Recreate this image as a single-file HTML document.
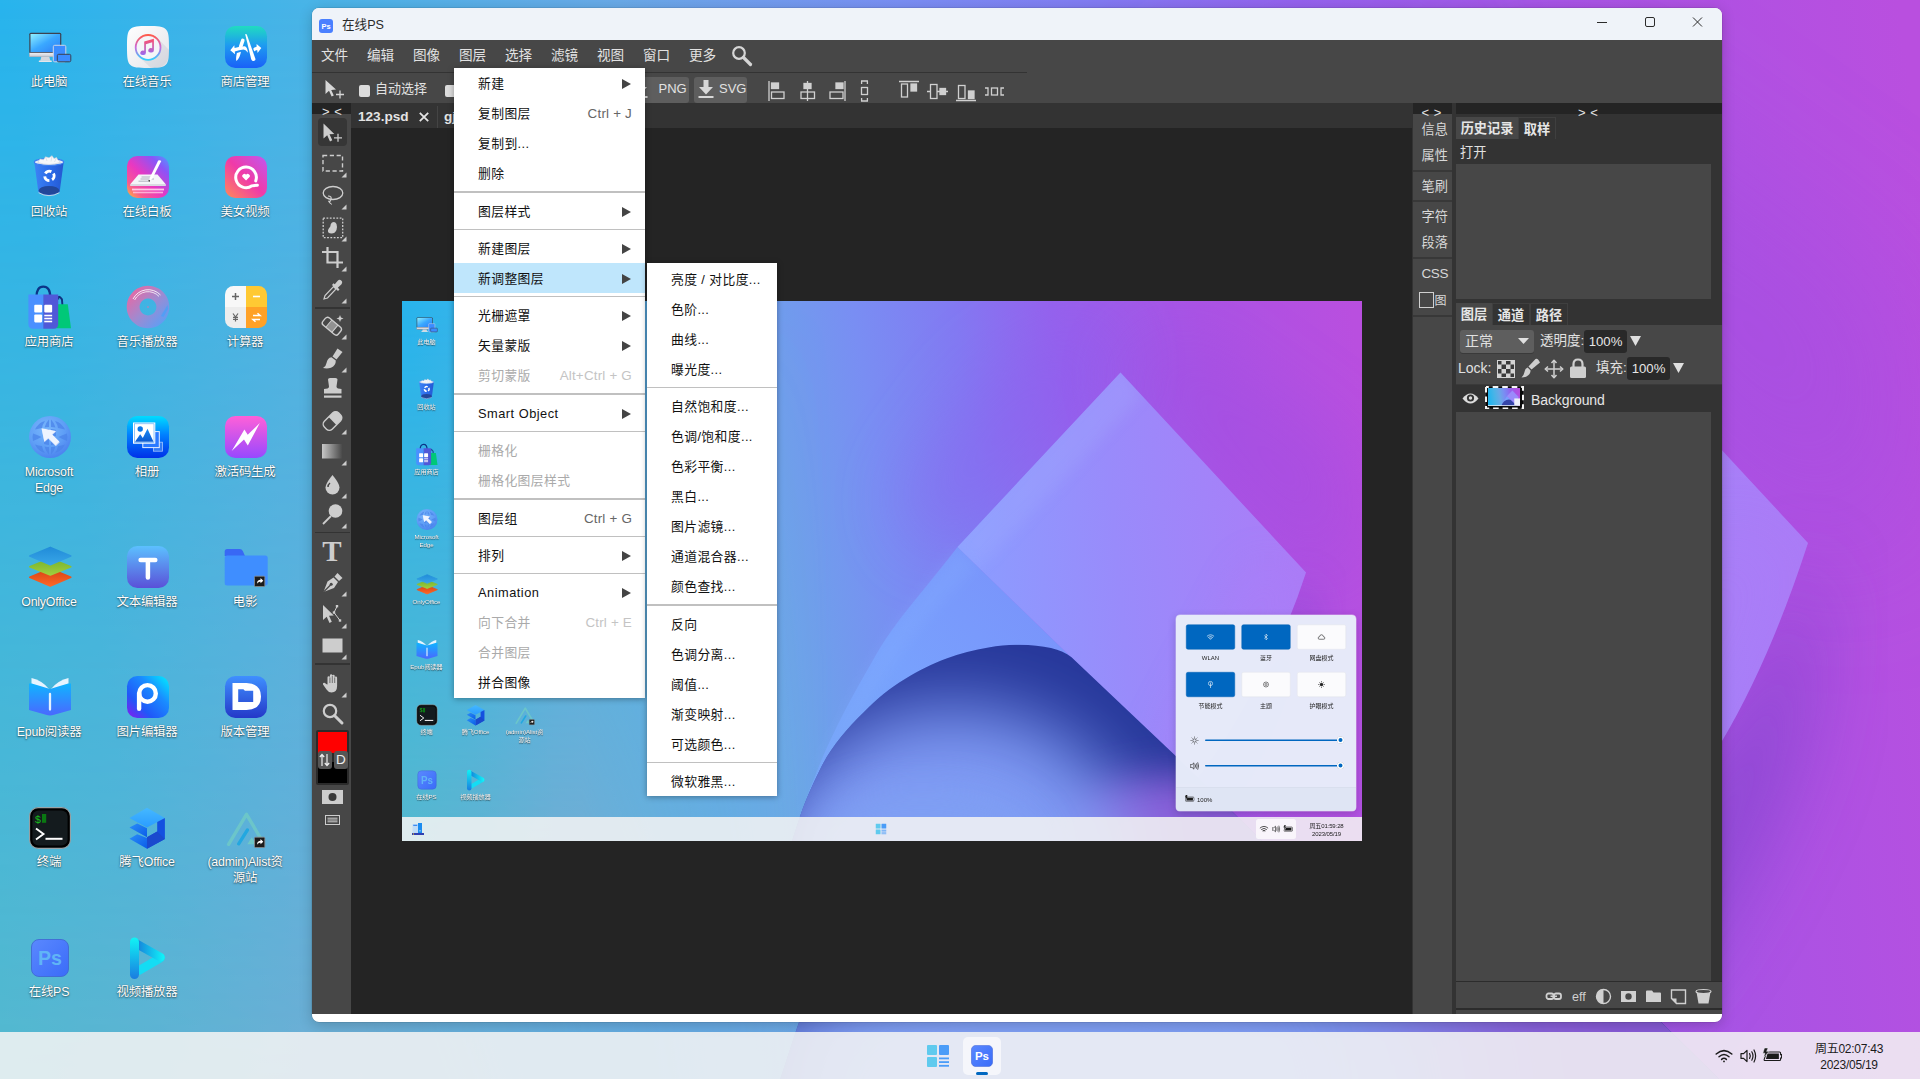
<!DOCTYPE html><html lang="zh-CN"><head><meta charset="utf-8"><title>在线PS</title><style>*{box-sizing:border-box;margin:0;padding:0}
html,body{width:1920px;height:1079px;overflow:hidden;background:#7b8df4}
body{font-family:"Liberation Sans","Noto Sans CJK SC",sans-serif;position:relative;color:#000}
.desk{position:absolute;left:0;top:0;width:1920px;height:1080px;overflow:hidden}
.desk .wp{position:absolute;left:0;top:0;display:block}
.dicon{position:absolute;width:98px;height:130px;text-align:center}
.dicon .ico{position:absolute;left:28.500px;top:26.300px;overflow:visible}
.dicon span{position:absolute;left:-6px;right:-6px;top:74px;font-size:12.400px;line-height:16px;color:#fff;text-shadow:0 1px 2px rgba(0,0,0,.55),0 0 1px rgba(0,0,0,.4);letter-spacing:-.2px}
.tb{position:absolute;left:0;top:1032px;width:1920px;height:48px;background:rgba(243,243,244,.865);z-index:5}
.tb .cl{position:absolute;left:1789px;width:120px;top:9px;text-align:center;font-size:12px;line-height:16px;color:#1b1b1b;letter-spacing:-.25px}
.tb .hl{position:absolute;left:963px;top:5px;width:38px;height:38px;border-radius:5px;background:rgba(255,255,255,.62)}
.tb .ind{position:absolute;left:976px;top:40px;width:12px;height:3px;border-radius:2px;background:#0067c0}
.tb svg{position:absolute}
.qs{position:absolute;left:1548px;top:628px;width:360px;height:392px;border-radius:8px;background:rgba(231,236,249,.985);box-shadow:0 0 0 1px rgba(255,255,255,.5),0 4px 16px rgba(0,0,0,.18);overflow:hidden}
.qb{position:absolute;width:98px;height:50px;border-radius:4px;background:#fbfbfd;border:1px solid #e3e5ea;display:flex;align-items:center;justify-content:center}
.qb.on{background:#0067c0;border-color:#0060b4}
.ql{position:absolute;width:98px;text-align:center;font-size:12px;line-height:16px;color:#222}
.qt{position:absolute;left:58px;width:268px;height:3px;border-radius:2px;background:#0067c0}
.qh{position:absolute;left:322px;width:14px;height:14px;border-radius:50%;background:#0067c0;border:3px solid #fff;box-shadow:0 0 1px rgba(0,0,0,.4)}
.qf{position:absolute;left:0;right:0;bottom:0;height:48px;background:rgba(222,228,243,.9);border-top:1px solid rgba(0,0,0,.05)}
.mini{transform:scale(.5);transform-origin:0 0}
.win{position:absolute;left:312px;top:8px;width:1410px;height:1014px;border-radius:7px;overflow:hidden;background:#fff;box-shadow:0 0 0 .5px rgba(0,0,0,.15),0 3px 14px rgba(0,0,0,.2)}
.wi{position:absolute;left:-312px;top:-8px;width:1920px;height:1079px;font-size:14px;color:#ddd}
.wi div,.wi span,.wi svg{position:absolute}
.tbar{left:312px;top:8px;width:1410px;height:32px;background:#eff3f9}
.tbar .tt{left:30px;top:7.500px;font-size:12.600px;line-height:18px;color:#2a2a2a}
.app{left:312px;top:40px;width:1410px;height:973.500px;background:#474747}
.mb{left:312px;top:40px;width:714.500px;height:32.500px;border-bottom:1.500px solid #333}
.mb span{top:7px;font-size:13.600px;line-height:18px;color:#e2e2e2;white-space:nowrap}
.ob span{font-size:13px;line-height:16px;color:#e2e2e2;white-space:nowrap}
.cb{width:11.500px;height:11.500px;border-radius:2px;background:#dcdcdc;top:85px}
.btn{top:77px;height:25.500px;border-radius:3px;background:#5e5e5e}
.dark{background:#242424}
.mid{background:#333}
.tab{top:106px;height:22px;background:#333;font-weight:bold;font-size:13.600px;line-height:22px;color:#e4e4e4;white-space:nowrap}
.tool{left:321px}
.tl{left:315px;width:35px;height:1.500px;background:#333}
.ncol span{left:1421.500px;font-size:13.200px;line-height:18px;color:#d8d8d8;white-space:nowrap}
.nl{left:1413px;width:39px;height:1.500px;background:#383838}
.ptab{font-weight:bold;font-size:13.200px;line-height:23px;color:#e6e6e6;text-align:center;white-space:nowrap}
.ptab.on{background:#474747}
.ptab.off{background:#333;border:1px solid #3f3f3f;border-bottom:none}
.fld{background:#292929;border-radius:3px;color:#e6e6e6;font-size:13.200px;line-height:23px;text-align:center}
.lp span{font-size:13.500px;line-height:18px;color:#e0e0e0;white-space:nowrap}
.menu{position:absolute;background:#fff;padding:.300px 0 .300px 0;box-shadow:0 1px 6px rgba(0,0,0,.35);font-size:12.800px;letter-spacing:.4px;color:#111}
.menu .mi{position:relative;height:30px;line-height:32px;white-space:nowrap}
.menu .mi span{position:absolute;left:24px;top:0}
.m2 .mi span{left:24px}
.menu .mi em{position:absolute;right:12.500px;top:0;font-style:normal;color:#666;font-size:13.400px;letter-spacing:.2px}
.menu .mi .ar{position:absolute;right:13.500px;top:11px;width:0;height:0;border-left:9px solid #444;border-top:5px solid transparent;border-bottom:5px solid transparent}
.menu .mi.hl{background:#bfe6fc}
.menu .mi.dis span{color:#aaa}
.menu .mi.dis em{color:#c4c4c4}
.menu .sep{height:1.400px;margin:3px 0 3px 0;background:#c0c0c0}
.m2{padding:1px 0 0 0}
.menu .mi span.lat{letter-spacing:.5px}
.m2 .mi{line-height:31px}
.m2 .mi .ar{top:11px}
</style></head><body>
<svg width="0" height="0" style="position:absolute">
<defs>
<linearGradient id="g_scr" x1="0" y1="0" x2="1" y2="1"><stop offset="0" stop-color="#8ff0ff"/><stop offset=".5" stop-color="#3aa8ff"/><stop offset="1" stop-color="#2f7df5"/></linearGradient>
<linearGradient id="g_sil" x1="0" y1="0" x2="0" y2="1"><stop offset="0" stop-color="#eef0f4"/><stop offset="1" stop-color="#c4c8d2"/></linearGradient>
<linearGradient id="g_wht" x1="0" y1="0" x2="1" y2="1"><stop offset="0" stop-color="#ffffff"/><stop offset="1" stop-color="#e2e3e8"/></linearGradient>
<linearGradient id="g_ring" x1="0" y1="0" x2="0" y2="1"><stop offset="0" stop-color="#ff5a4a"/><stop offset=".5" stop-color="#c86add"/><stop offset="1" stop-color="#2fd0ff"/></linearGradient>
<linearGradient id="g_note" x1="0" y1="0" x2="0" y2="1"><stop offset="0" stop-color="#ff4f6a"/><stop offset="1" stop-color="#9a6af0"/></linearGradient>
<linearGradient id="g_store" x1="0" y1="0" x2="0" y2="1"><stop offset="0" stop-color="#20dcc0"/><stop offset=".45" stop-color="#1e9cf0"/><stop offset="1" stop-color="#1a60f8"/></linearGradient>
<linearGradient id="g_bin" x1="0" y1="0" x2="1" y2="0"><stop offset="0" stop-color="#3d83f5"/><stop offset=".6" stop-color="#2a68e6"/><stop offset="1" stop-color="#2458d0"/></linearGradient>
<linearGradient id="g_wb" x1="1" y1="0" x2="0" y2="1"><stop offset="0" stop-color="#4aa0ff"/><stop offset=".22" stop-color="#8a55f8"/><stop offset=".55" stop-color="#ea38c0"/><stop offset=".8" stop-color="#f85a90"/><stop offset="1" stop-color="#ffc030"/></linearGradient>
<linearGradient id="g_girl" x1="1" y1="0" x2="0" y2="1"><stop offset="0" stop-color="#c058f0"/><stop offset=".5" stop-color="#f03aa8"/><stop offset="1" stop-color="#ff8a58"/></linearGradient>
<linearGradient id="g_disc" x1="0" y1="0" x2="1" y2="1"><stop offset="0" stop-color="#fa5f98"/><stop offset=".5" stop-color="#a08ad0"/><stop offset="1" stop-color="#4aa4ff"/></linearGradient>
<radialGradient id="g_globe" cx=".4" cy=".3" r=".75"><stop offset="0" stop-color="#78b6fc"/><stop offset=".6" stop-color="#5e9ef6"/><stop offset="1" stop-color="#4a80ee"/></radialGradient>
<linearGradient id="g_album" x1="0" y1="0" x2="0" y2="1"><stop offset="0" stop-color="#00dcff"/><stop offset=".45" stop-color="#0080ff"/><stop offset="1" stop-color="#0030e8"/></linearGradient>
<linearGradient id="g_mtn" x1="0" y1="0" x2="0" y2="1"><stop offset="0" stop-color="#1a8cf5"/><stop offset="1" stop-color="#0a58d0"/></linearGradient>
<linearGradient id="g_bolt" x1="0" y1="0" x2="0" y2="1"><stop offset="0" stop-color="#ff60d8"/><stop offset="1" stop-color="#9848ff"/></linearGradient>
<linearGradient id="g_txt" x1="0" y1="0" x2="0" y2="1"><stop offset="0" stop-color="#5cc0ff"/><stop offset="1" stop-color="#5a50d8"/></linearGradient>
<linearGradient id="g_book" x1="0" y1="0" x2="0" y2="1"><stop offset="0" stop-color="#10b4ff"/><stop offset="1" stop-color="#4a68ff"/></linearGradient>
<linearGradient id="g_pe" x1="1" y1="0" x2="0" y2="1"><stop offset="0" stop-color="#00f0ff"/><stop offset=".35" stop-color="#1a8cff"/><stop offset=".7" stop-color="#2058f8"/><stop offset="1" stop-color="#8a18f0"/></linearGradient>
<linearGradient id="g_ver" x1="0" y1="0" x2="0" y2="1"><stop offset="0" stop-color="#3f90ff"/><stop offset="1" stop-color="#2438c8"/></linearGradient>
<linearGradient id="g_ps" x1="0" y1="0" x2="1" y2="1"><stop offset="0" stop-color="#5a88ff"/><stop offset="1" stop-color="#3a6cf8"/></linearGradient>
<linearGradient id="g_vp1" gradientUnits="userSpaceOnUse" x1="0" y1="0" x2="0" y2="42"><stop offset="0" stop-color="#10f5f5"/><stop offset="1" stop-color="#1a7ce0"/></linearGradient>
<linearGradient id="g_vp2" gradientUnits="userSpaceOnUse" x1="8" y1="0" x2="36" y2="0"><stop offset="0" stop-color="#1878d8"/><stop offset="1" stop-color="#10f0f8"/></linearGradient>
<linearGradient id="g_tf1" x1="0" y1="0" x2="0" y2="1"><stop offset="0" stop-color="#45b8ff"/><stop offset="1" stop-color="#2a9cff"/></linearGradient>
<linearGradient id="g_tf2" x1="0" y1="0" x2="1" y2="1"><stop offset="0" stop-color="#2a8ef8"/><stop offset="1" stop-color="#0a5ce8"/></linearGradient>
<linearGradient id="g_oo1" gradientUnits="userSpaceOnUse" x1="0" y1="0" x2="0" y2="20"><stop offset="0" stop-color="#1f8ad8"/><stop offset="1" stop-color="#3aa8e8"/></linearGradient>
<linearGradient id="g_oo2" gradientUnits="userSpaceOnUse" x1="0" y1="16" x2="0" y2="30"><stop offset="0" stop-color="#7fb82f"/><stop offset="1" stop-color="#a2d040"/></linearGradient>
<linearGradient id="g_oo3" gradientUnits="userSpaceOnUse" x1="0" y1="27" x2="0" y2="41"><stop offset="0" stop-color="#e04a18"/><stop offset="1" stop-color="#ff6a28"/></linearGradient>
</defs></svg>
<div class="desk"><svg class="wp" viewBox="0 0 1920 1080" width="1920" height="1080" preserveAspectRatio="none">
<defs>
<linearGradient id="wpbg" gradientUnits="userSpaceOnUse" x1="0" y1="0" x2="1920" y2="-300">
<stop offset="0" stop-color="#28b4ed"/><stop offset=".158" stop-color="#49b4e7"/><stop offset=".315" stop-color="#69a9e7"/><stop offset=".457" stop-color="#798ef3"/><stop offset=".559" stop-color="#827af2"/><stop offset=".66" stop-color="#9562ed"/><stop offset=".81" stop-color="#aa53e4"/><stop offset=".965" stop-color="#b94fdf"/>
</linearGradient>
<linearGradient id="wpwc" gradientUnits="userSpaceOnUse" x1="0" y1="0" x2="800" y2="0"><stop offset="0" stop-color="#64bac4"/><stop offset=".38" stop-color="#7fadcd"/><stop offset="1" stop-color="#7fa8dc"/></linearGradient>
<linearGradient id="wpwv" gradientUnits="userSpaceOnUse" x1="0" y1="0" x2="0" y2="1080"><stop offset="0" stop-color="#fff" stop-opacity="0"/><stop offset=".45" stop-color="#fff" stop-opacity=".36"/><stop offset="1" stop-color="#fff" stop-opacity=".74"/></linearGradient>
<linearGradient id="wpwh" gradientUnits="userSpaceOnUse" x1="0" y1="0" x2="860" y2="0"><stop offset="0" stop-color="#fff"/><stop offset=".42" stop-color="#fff"/><stop offset="1" stop-color="#000"/></linearGradient>
<mask id="wpmh"><rect width="1920" height="1080" fill="url(#wpwh)"/></mask>
<mask id="wpm"><rect width="1920" height="1080" fill="url(#wpwv)" mask="url(#wpmh)"/></mask>
<linearGradient id="wpdia" gradientUnits="userSpaceOnUse" x1="1130" y1="560" x2="1800" y2="500">
<stop offset="0" stop-color="#8b9dff"/><stop offset=".45" stop-color="#998bfb"/><stop offset="1" stop-color="#ab7cf7"/>
</linearGradient>
<linearGradient id="wplb" gradientUnits="userSpaceOnUse" x1="800" y1="1000" x2="1300" y2="600">
<stop offset="0" stop-color="#74a6f6"/><stop offset=".5" stop-color="#78a1fd"/><stop offset="1" stop-color="#7a93fb"/>
</linearGradient>
<radialGradient id="wpcurl" gradientUnits="userSpaceOnUse" cx="1090" cy="1090" r="520" gradientTransform="translate(1090 1090) scale(1 .78) translate(-1090 -1090)">
<stop offset="0" stop-color="#7a9bf2"/><stop offset=".4" stop-color="#7488eb"/><stop offset=".68" stop-color="#5364cd"/><stop offset=".88" stop-color="#3242aa"/><stop offset="1" stop-color="#27389b"/>
</radialGradient>
<linearGradient id="wpcurl2" gradientUnits="userSpaceOnUse" x1="1200" y1="900" x2="1560" y2="1080">
<stop offset="0" stop-color="#8a55d8" stop-opacity="0"/><stop offset="1" stop-color="#8a55d8" stop-opacity=".9"/>
</linearGradient>
<filter id="wpblur" x="-30%" y="-30%" width="160%" height="160%"><feGaussianBlur stdDeviation="40"/></filter>
<filter id="wpblur3" x="-50%" y="-50%" width="200%" height="200%"><feGaussianBlur stdDeviation="75"/></filter>
<filter id="wpblur2" x="-30%" y="-30%" width="160%" height="160%"><feGaussianBlur stdDeviation="14"/></filter>
</defs>
<rect width="1920" height="1080" fill="url(#wpbg)"/>
<rect width="860" height="1080" fill="url(#wpwc)" mask="url(#wpm)"/>
<!-- shadow under the sheet at right -->
<path d="M1808 545 Q1770 660 1722 741 Q1650 880 1590 955 L1560 1010 L1660 1000 Q1740 900 1790 770 Q1822 660 1808 545Z" fill="#7640c6" opacity=".62" filter="url(#wpblur)"/>
<!-- soft glow left of light-blue sheet -->
<path d="M1437 143 L1130 470 L1040 500 L1000 380 L1170 150 L1380 20Z" fill="#8d5cee" opacity=".4" filter="url(#wpblur3)"/>
<path d="M1437 143 L1808 543 L1900 560 L1900 300 L1560 60Z" fill="#9c4be0" opacity=".35" filter="url(#wpblur3)"/>
<!-- light blue sheet -->
<path d="M1111 492 C1040 585 985 640 941 720 C900 790 860 865 830 940 C815 978 805 1005 796 1031 L780 1080 L1700 1080 L1339 713 Z" fill="url(#wplb)"/>
<!-- diamond sheet -->
<path d="M1437 143 L1808 543 Q1770 660 1722 741 Q1650 880 1590 955 L1339 713 L1111 492 Z" fill="url(#wpdia)"/>
<clipPath id="wpdc"><path d="M1437 143 L1808 543 Q1770 660 1722 741 Q1650 880 1590 955 L1339 713 L1111 492 Z"/></clipPath>
<g clip-path="url(#wpdc)"><path d="M1437 120 L1090 492 L1150 540 L1480 190Z" fill="#a8b6ff" opacity=".22" filter="url(#wpblur2)"/><path d="M1808 543 L1722 741 L1590 955 L1500 900 L1700 520Z" fill="#b07cf8" opacity=".25" filter="url(#wpblur)"/></g>
<path d="M1111 492 C1040 585 985 640 941 720 C900 790 860 865 830 940 L870 940 C900 870 940 790 980 730 C1030 650 1090 590 1150 530Z" fill="#86b0ff" opacity=".25" filter="url(#wpblur2)"/>
<!-- dark curl -->
<clipPath id="wpcc"><path d="M780 1080 L796 1031 C810 990 825 960 839 931 C860 890 890 855 923 823 C950 795 975 775 1006 756 C1035 738 1060 726 1089 715 C1115 705 1145 698 1173 693 C1195 689 1215 687 1235 687.6 C1258 688 1280 690 1298 694 C1315 698 1328 704 1339 712.6 L1548 910.5 L1720 1080 Z"/></clipPath>
<g clip-path="url(#wpcc)">
<rect x="700" y="600" width="1100" height="500" fill="#26379a"/>
<ellipse cx="1560" cy="1120" rx="300" ry="170" fill="#8a5cd8" filter="url(#wpblur)"/>
<ellipse cx="1100" cy="1110" rx="360" ry="300" fill="#7f9af4" filter="url(#wpblur3)"/>
<ellipse cx="1040" cy="1090" rx="240" ry="120" fill="#7fa0f3" opacity=".8" filter="url(#wpblur)"/>
</g>
</svg>
<div class="dicon" style="left:0px;top:0.0px"><svg class="ico" viewBox="0 0 42 42" width="42" height="42" ><g transform="translate(-.700 .800)">
<rect x="1" y="6" width="32" height="24" rx="1.5" fill="#3c4250"/>
<rect x="2.2" y="7.2" width="29.6" height="18" fill="url(#g_scr)"/>
<rect x="1" y="26" width="32" height="4" fill="url(#g_sil)"/>
<path d="M13 30 L21 30 L22 34 L12 34Z" fill="#d4d7de"/><rect x="10.5" y="33.6" width="13" height="1.6" rx=".6" fill="#e4e6ea"/>
<rect x="25" y="18.5" width="12.5" height="16.5" rx="1.4" fill="#3b8cff" stroke="#cfd6e6" stroke-width="1"/>
<rect x="29" y="27.5" width="13.5" height="7.5" rx="1.4" fill="#3b8cff" stroke="#3c4250" stroke-width="1"/>
</g></svg><span>此电脑</span></div><div class="dicon" style="left:98px;top:0.0px"><svg class="ico" viewBox="0 0 42 42" width="42" height="42" >
<path d="M21 0 C31 0 36 .300 38.800 3.200 C41.700 6 42 11 42 21 C42 31 41.700 36 38.800 38.800 C36 41.700 31 42 21 42 C11 42 6 41.700 3.200 38.800 C.300 36 0 31 0 21 C0 11 .300 6 3.200 3.200 C6 .300 11 0 21 0Z" fill="url(#g_wht)"/>
<path d="M30.500 12 L42 24 L42 27 Q41.500 40.500 30 41.700 L24 41.900 L12 31Z" fill="#1a2a50" opacity=".07"/>
<circle cx="21.100" cy="21.400" r="12.400" fill="#f4f5f8" stroke="url(#g_ring)" stroke-width="1.800"/>
<path d="M17.200 15.600 L26.900 12.700 L26.900 24.300 A2.800 2.200 0 1 1 25.200 22.300 L25.200 16.300 L18.900 18.200 L18.900 26.700 A2.800 2.200 0 1 1 17.200 24.700Z" fill="url(#g_note)"/>
</svg><span>在线音乐</span></div><div class="dicon" style="left:196px;top:0.0px"><svg class="ico" viewBox="0 0 42 42" width="42" height="42" >
<rect x="0" y="0" width="42" height="42" rx="10.300" fill="url(#g_store)"/>
<g fill="#fff"><path d="M20.200 8.200 Q21.200 7.500 21.900 8.700 L30.300 32.400 Q30.700 34.800 28.800 35.100 Q27 35.300 26.200 33.200Z"/>
<path d="M17.800 14.400 L15.600 20.800" stroke="#fff" stroke-width="3.600" stroke-linecap="round"/>
<path d="M11.900 26.900 L15.900 25.700 Q15.200 31.200 11.500 35.100 Q10.500 33 11.900 26.900Z"/>
<path d="M5.300 24.200 L9.300 19.300 L9.600 22.100 Q15 20.500 19.600 20.300 Q22.200 20.600 23 26.800 Q20.500 23.600 18.500 23.500 Q14 24 9.800 25.400 L10 28.300Z"/>
<path d="M36.300 22 L31.600 18.100 L31.600 20.700 Q29.500 21.100 28.200 22.700 L29.300 25.500 Q30.500 24.200 32.200 24 L32.600 26.900Z"/></g>
</svg><span>商店管理</span></div><div class="dicon" style="left:0px;top:130.1px"><svg class="ico" viewBox="0 0 42 42" width="42" height="42" >
<path d="M5.300 6 L34.700 6 L30.600 36.300 Q20 42.600 9.400 36.300Z" fill="url(#g_bin)"/>
<ellipse cx="20" cy="34.400" rx="10.300" ry="4.400" fill="#22479a"/>
<path d="M9.600 36.700 Q20 42.600 30.400 36.700" fill="none" stroke="#efe6e4" stroke-width=".9" opacity=".85"/>
<ellipse cx="20" cy="6" rx="14.700" ry="3.400" fill="#e4eaf6" stroke="#3b7df0" stroke-width="1.100"/>
<path d="M9 6.500 L11 3 L14.500 3.800 L16.500 .800 L20 1.800 L23 -.300 L25 2.500 L27.500 1.500 L29 4 L31.500 6.300 Q20 10.500 9 6.500Z" fill="#f6f7fa" stroke="#c4cad6" stroke-width=".5"/>
<path d="M16.500 .800 L18 5 M23 -.300 L22 5.500 M27.500 1.500 L25.500 6" stroke="#c9ced8" stroke-width=".5" fill="none"/>
<g fill="none" stroke="#fff" stroke-width="2.900"><path d="M16.33 17.55 A4.7 4.7 0 0 1 22.39 15.64"/><path d="M24.47 17.55 A4.7 4.7 0 0 1 23.10 23.75"/><path d="M20.40 24.60 A4.7 4.7 0 0 1 15.72 20.31"/></g>
</svg><span>回收站</span></div><div class="dicon" style="left:98px;top:130.1px"><svg class="ico" viewBox="0 0 42 42" width="42" height="42" >
<rect x="0" y="0" width="42" height="42" rx="10.300" fill="url(#g_wb)"/>
<path d="M6 36.5 L36 36.5" stroke="#ffd0e8" stroke-width="1.6" opacity=".75"/><path d="M5 33.5 L37 33.5" stroke="#ffd8ee" stroke-width="1.8" opacity=".9"/>
<path d="M11.5 18.5 L30.5 18.5 L38.5 28 L38.5 30 L3.5 30 L3.5 28Z" fill="#f4f4f8"/><path d="M3.5 28 L38.5 28 L38.5 30 L3.5 30Z" fill="#d9dae2"/>
<path d="M14.5 21 L24 21 M13.5 23 L27 23 M11.5 25.2 L21 25.2" stroke="#9ea2b0" stroke-width=".8"/>
<path d="M31.2 4.5 Q33 3.6 34.3 5 L25 23.3 L22.3 25 L22.6 22Z" fill="#fff"/><circle cx="22.2" cy="24.8" r=".9" fill="#333"/>
</svg><span>在线白板</span></div><div class="dicon" style="left:196px;top:130.1px"><svg class="ico" viewBox="0 0 42 42" width="42" height="42" >
<rect x="0" y="0" width="42" height="42" rx="10.300" fill="url(#g_girl)"/>
<path d="M32.400 29.200 L26.960 29.840 A10.300 10.300 0 1 1 30.730 24.920" fill="none" stroke="#fff" stroke-width="3" stroke-linecap="round"/>
<path d="M21.050 24.600 L17.300 20.800 A2.150 2.150 0 0 1 21.050 18.800 A2.150 2.150 0 0 1 24.800 20.800Z" fill="#fff"/>
</svg><span>美女视频</span></div><div class="dicon" style="left:0px;top:260.1px"><svg class="ico" viewBox="0 0 42 42" width="42" height="42" ><g transform="translate(-2.200 -1.500) scale(1.065)">
<path d="M29.5 14 Q29.5 9 33 14 L33.5 20" fill="none" stroke="#10307e" stroke-width="1.8"/>
<path d="M24 18.5 L38.5 18.5 L41.5 41 L24 41Z" fill="#00c878"/>
<path d="M9 12 Q9 2 15.5 2 Q22 2 22 12" fill="none" stroke="#0c3488" stroke-width="2.2"/>
<path d="M1.5 9.5 L15.5 9.5 L15.5 41.5 L6 41.5 Q1.5 41.5 1.5 37Z" fill="#4a90ff"/><path d="M15.5 9.5 L29.5 9.5 L29.5 37 Q29.5 41.5 25 41.5 L15.5 41.5Z" fill="#5058d8"/>
<g fill="#fff"><rect x="7" y="19" width="7.4" height="7.4" rx="1"/><rect x="16.4" y="19" width="7.4" height="7.4" rx="1"/><rect x="7" y="28.2" width="7.4" height="7.4" rx="1"/><rect x="16.4" y="28.4" width="7.4" height="1.5"/><rect x="16.4" y="31.2" width="7.4" height="1.5"/><rect x="16.4" y="34" width="7.4" height="1.5"/></g>
</g></svg><span>应用商店</span></div><div class="dicon" style="left:98px;top:260.1px"><svg class="ico" viewBox="0 0 42 42" width="42" height="42" >
<path fill-rule="evenodd" d="M21 -.300 A21.300 21.300 0 1 1 20.990 -.300Z M21 12.600 A8.400 8.400 0 1 0 21.010 12.600Z" fill="url(#g_disc)"/>
<path d="M6 13 A17 17 0 0 1 33.5 9" fill="none" stroke="#fff" stroke-width=".9" opacity=".95"/><path d="M7.6 14 A15 15 0 0 1 32 10.4" fill="none" stroke="#fff" stroke-width=".9" opacity=".85"/>
<path d="M34 30 L40.5 19 L41 23 L36.5 31Z" fill="#4aa0f8" opacity=".8"/><circle cx="21" cy="21" r=".8" fill="#e070a8"/>
</svg><span>音乐播放器</span></div><div class="dicon" style="left:196px;top:260.1px"><svg class="ico" viewBox="0 0 42 42" width="42" height="42" >
<clipPath id="c_calc"><rect x="0" y="0" width="42" height="42" rx="8.500"/></clipPath>
<g clip-path="url(#c_calc)"><rect x="0" y="0" width="21" height="21" fill="#f8f8f8"/><rect x="21" y="0" width="21" height="21" fill="#ffc933"/><rect x="0" y="21" width="21" height="21" fill="#ededed"/><rect x="21" y="21" width="21" height="21" fill="#ffa126"/></g>
<path d="M7 10.5 L14 10.5 M10.5 7 L10.5 14" stroke="#666" stroke-width="1.5"/><path d="M28 10.5 L35 10.5" stroke="#fff" stroke-width="1.6"/>
<path d="M8 27.500 L10.500 31 L13 27.500 M10.500 31 L10.500 35.500 M8 31.300 L13 31.300 M8 33.400 L13 33.400" stroke="#666" stroke-width="1.200" fill="none"/>
<path d="M28 29.5 L35 29.5 L32.5 27.3 M35 33.5 L28 33.5 L30.500 35.7" stroke="#fff" stroke-width="1.5" fill="none"/>
</svg><span>计算器</span></div><div class="dicon" style="left:0px;top:390.2px"><svg class="ico" viewBox="0 0 42 42" width="42" height="42" >
<circle cx="21" cy="21" r="21" fill="url(#g_globe)"/>
<g fill="#4a84ea" opacity=".75">
<path d="M20 3.500 Q16.500 7 15.500 11.500 Q18 11 20 11Z"/><path d="M22 3.500 Q25.500 7 26.500 11.500 Q24 11 22 11Z"/>
<path d="M13 6 Q8 9 6 13.500 Q9.500 12.500 13 12 Q13.500 8.500 16 5Z"/><path d="M29 6 Q34 9 36 13.500 Q32.500 12.500 29 12 Q28.500 8.500 26 5Z"/>
<path d="M4 17.500 Q3 21 4 25 Q8 23.500 12.500 21 Q8 18.500 4 17.500Z"/><path d="M38 17.500 Q39 21 38 25 Q34 23.500 29.500 21 Q34 18.500 38 17.500Z"/>
<path d="M13 36 Q8 33 6 28.500 Q9.500 29.500 13 30 Q13.500 33.500 16 37Z"/><path d="M29 36 Q34 33 36 28.500 Q32.500 29.500 29 30 Q28.500 33.500 26 37Z"/>
<path d="M20 38.500 Q16.500 35 15.500 30.500 Q18 31 20 31Z"/><path d="M22 38.500 Q25.500 35 26.500 30.500 Q24 31 22 31Z"/>
<path d="M15 14 Q18 13 20 13 L20 20 L15 20Z"/><path d="M27 14 Q24 13 22 13 L22 20 L27 20Z"/><path d="M15 28 Q18 29 20 29 L20 22 L15 22Z"/><path d="M27 28 Q24 29 22 29 L22 22 L27 22Z"/>
</g>
<path d="M12.600 13 L27.200 15.600 L23.200 19 L30.800 26.300 L26.800 30.300 L19.300 22.700 L15.400 26.300Z" fill="#c4d6fa"/>
<path d="M12.600 12.300 L27 15 L23 18.300 L30.300 25.600 L26.600 29.300 L19.300 22 L15.300 25.500Z" fill="#eef4ff"/>
</svg><span>Microsoft<br>Edge</span></div><div class="dicon" style="left:98px;top:390.2px"><svg class="ico" viewBox="0 0 42 42" width="42" height="42" >
<rect x="0" y="0" width="42" height="42" rx="10.300" fill="url(#g_album)"/>
<rect x="26.500" y="26.200" width="9" height="9" fill="#3f86f5" stroke="#cfe0ff" stroke-width=".8" opacity=".8"/>
<rect x="15.800" y="15.600" width="16.500" height="16" fill="#2a7aff" stroke="#e6efff" stroke-width="1"/>
<rect x="6" y="6.500" width="22.300" height="21.200" fill="#fff"/><rect x="7.300" y="7.800" width="19.700" height="18.600" fill="none" stroke="#4aa0f5" stroke-width=".6"/>
<path d="M8 25.800 L13.200 18.200 L15.800 22 L20.500 12.800 L26.500 25.800Z" fill="url(#g_mtn)"/><circle cx="13.200" cy="13" r="2.700" fill="#0a78e8"/>
</svg><span>相册</span></div><div class="dicon" style="left:196px;top:390.2px"><svg class="ico" viewBox="0 0 42 42" width="42" height="42" >
<rect x="0" y="0" width="42" height="42" rx="10.300" fill="url(#g_bolt)"/>
<path d="M34.800 7.100 L22.700 18.700 L19.400 13.500 L6.700 35 L19 23.400 L22.800 29.500Z" fill="#fff"/>
</svg><span>激活码生成</span></div><div class="dicon" style="left:0px;top:520.2px"><svg class="ico" viewBox="0 0 42 42" width="42" height="42" >
<g stroke-width="1.600" stroke-linejoin="round">
<path d="M21.300 22.800 L41.800 31.300 L21.300 39.900 L.800 31.300Z" fill="url(#g_oo3)" stroke="url(#g_oo3)"/>
<path d="M21.300 12.600 L41.800 20.800 L21.300 28.900 L.800 20.800Z" fill="url(#g_oo2)" stroke="url(#g_oo2)"/>
<path d="M21.300 1.400 L41.800 10 L21.300 18.700 L.800 10Z" fill="url(#g_oo1)" stroke="url(#g_oo1)"/></g>
</svg><span>OnlyOffice</span></div><div class="dicon" style="left:98px;top:520.2px"><svg class="ico" viewBox="0 0 42 42" width="42" height="42" >
<rect x="0" y="0" width="42" height="42" rx="10.300" fill="url(#g_txt)"/>
<path d="M13.600 14.100 L28.300 14.100 M20.900 14.100 L20.900 31.500" stroke="#fff" stroke-width="4.500" stroke-linecap="round" fill="none"/>
</svg><span>文本编辑器</span></div><div class="dicon" style="left:196px;top:520.2px"><svg class="ico" viewBox="0 0 42 42" width="42" height="42" >
<path d="M-.300 5.500 Q-.300 3 2.200 3 L14.800 3 Q16.800 3 17.800 5 L20 10 L-.300 10Z" fill="#3868f5"/>
<rect x="-.300" y="9.500" width="43" height="30" rx="2.500" fill="#3f8eff"/>
<g transform="translate(-1 -.300)"><rect x="30.5" y="30.5" width="10.300" height="10.300" rx="1" fill="#1c1c1c" stroke="#8a8a8a" stroke-width=".8"/><path d="M33 38 C33 35 34.5 34 36.5 34 L36.5 32.3 L39.3 35 L36.5 37.6 L36.5 36 C35 36 34 36.5 33 38Z" fill="#fff"/></g></svg><span>电影</span></div><div class="dicon" style="left:0px;top:650.2px"><svg class="ico" viewBox="0 0 42 42" width="42" height="42" >
<path d="M2.500 2 Q13 4.500 19.500 12.500 L21 16 L21 34 L2.500 28Z" fill="#e6f4ff"/><path d="M39.500 2 Q29 4.500 22.500 12.500 L21 16 L21 34 L39.500 28Z" fill="#e6f4ff"/>
<path d="M0 7.500 L2.800 7.500 Q13 10.500 21 13 Q29 10.500 39.200 7.500 L42 7.500 L42 34 L25 38.800 Q21 40.300 17 38.800 L0 34Z" fill="url(#g_book)"/>
<path d="M21 18 L21 33.500" stroke="#e4f2ff" stroke-width="2.300" stroke-linecap="round"/>
</svg><span>Epub阅读器</span></div><div class="dicon" style="left:98px;top:650.2px"><svg class="ico" viewBox="0 0 42 42" width="42" height="42" >
<rect x="0" y="0" width="42" height="42" rx="10.300" fill="url(#g_pe)"/>
<circle cx="20.500" cy="17.400" r="8.300" fill="none" stroke="#fff" stroke-width="4.400"/><path d="M12.100 17.400 L12.100 32.800" stroke="#fff" stroke-width="4.400" stroke-linecap="round"/>
</svg><span>图片编辑器</span></div><div class="dicon" style="left:196px;top:650.2px"><svg class="ico" viewBox="0 0 42 42" width="42" height="42" >
<rect x="0" y="0" width="42" height="42" rx="10.300" fill="url(#g_ver)"/>
<path fill-rule="evenodd" d="M7.500 7 L21.500 7 Q36 7.500 36 20.500 Q36 33.600 21.500 34.100 L7.500 34.100Z M13.200 13.200 L13.200 26 L28.200 26 L28.200 14.700 L19.900 14.700 L18.400 13.200Z" fill="#fff"/>
</svg><span>版本管理</span></div><div class="dicon" style="left:0px;top:780.3px"><svg class="ico" viewBox="0 0 42 42" width="42" height="42" >
<rect x=".600" y=".600" width="40.800" height="40.800" rx="8.500" fill="#000" stroke="#9aa3a6" stroke-width="1.100"/><rect x="3.400" y="3.400" width="35.200" height="35.200" rx="6.200" fill="#141b1e"/>
<text x="5.800" y="15.600" font-family="Liberation Mono, monospace" font-size="10.500" fill="#17c11a">$</text><rect x="13" y="7" width="4.200" height="8.800" fill="#0a7812"/>
<path d="M7 21.500 L14.500 27 L7 32.500" fill="none" stroke="#fff" stroke-width="1.900"/><path d="M16.500 31.800 L33.500 31.800" stroke="#fff" stroke-width="2"/>
</svg><span>终端</span></div><div class="dicon" style="left:98px;top:780.3px"><svg class="ico" viewBox="0 0 42 42" width="42" height="42" ><g transform="translate(-.800 0)">
<path d="M20.800 .800 L38.700 10.900 L20.800 20.500 L3.300 10.900Z" fill="url(#g_tf1)"/>
<path d="M38.700 10.900 L38.700 31.900 L20.800 41.800 L20.800 30.300 L31 24.600 L31 15Z" fill="#1450e0"/>
<path d="M20.800 30.300 L31 24.600 L38.700 31.900 L20.800 41.800Z" fill="#1a4ace"/>
<path d="M3.300 20.600 L11 16.400 L20.800 21.300 L20.800 30.300Z" fill="url(#g_tf2)"/>
<path d="M3.300 31.700 L11 27.200 L20.800 31.100 L20.800 41.800Z" fill="url(#g_tf2)"/>
</g></svg><span>腾飞Office</span></div><div class="dicon" style="left:196px;top:780.3px"><svg class="ico" viewBox="0 0 42 42" width="42" height="42" >
<path d="M3.600 37.300 L21.500 7.300 L37.500 34.500" fill="none" stroke="#76d2c0" stroke-width="3.400" stroke-linecap="round" stroke-linejoin="round" opacity=".62"/>
<path d="M22.400 23 L13.700 36.800" stroke="#1aa6e2" stroke-width="3.300" stroke-linecap="round" opacity=".85"/><path d="M22.300 37.300 L26.800 30.300 L31 37.300Z" fill="#76d2c0" opacity=".7"/>
<g transform="translate(-1 -.300)"><rect x="30.5" y="30.5" width="10.300" height="10.300" rx="1" fill="#1c1c1c" stroke="#8a8a8a" stroke-width=".8"/><path d="M33 38 C33 35 34.5 34 36.5 34 L36.5 32.3 L39.3 35 L36.5 37.6 L36.5 36 C35 36 34 36.5 33 38Z" fill="#fff"/></g></svg><span>(admin)Alist资<br>源站</span></div><div class="dicon" style="left:0px;top:910.4px"><svg class="ico" viewBox="0 0 42 42" width="42" height="42" >
<rect x="2.500" y="2.500" width="37" height="37" rx="7.500" fill="url(#g_ps)" stroke="#3f63d0" stroke-width=".8"/>
<text x="21" y="28" text-anchor="middle" font-family="Liberation Sans, sans-serif" font-weight="bold" font-size="20.500" fill="#60b4f6" textLength="24" lengthAdjust="spacingAndGlyphs">Ps</text>
</svg><span>在线PS</span></div><div class="dicon" style="left:98px;top:910.4px"><svg class="ico" viewBox="0 0 42 42" width="42" height="42" >
<path d="M12 33.500 L33.500 21" stroke="#14dcf4" stroke-width="8.500" stroke-linecap="round" fill="none"/>
<path d="M9 6.500 L33.500 20.200" stroke="url(#g_vp2)" stroke-width="8.500" stroke-linecap="round" fill="none"/>
<path d="M7.500 5 L7.500 37.500" stroke="url(#g_vp1)" stroke-width="9" stroke-linecap="round" fill="none"/>
</svg><span>视频播放器</span></div><div class="tb">
<svg style="left:927px;top:13px" width="22" height="22" viewBox="0 0 22 22"><rect x="0" y="0" width="10" height="10" rx="1" fill="#5fcaee"/><rect x="12" y="0" width="10" height="10" rx="1" fill="#4a9cf8"/><rect x="0" y="12" width="10" height="10" rx="1" fill="#5fcaee"/><rect x="12" y="12.500" width="10" height="1.800" fill="#4a9cf8"/><rect x="12" y="16.200" width="10" height="1.800" fill="#4a9cf8"/><rect x="12" y="19.900" width="10" height="1.800" fill="#4a9cf8"/></svg>
<div class="hl"></div>
<svg style="left:971px;top:13px" width="22" height="22" viewBox="0 0 22 22"><rect x=".4" y=".4" width="21.200" height="21.200" rx="4.500" fill="url(#g_ps)" stroke="#4468d8" stroke-width=".6"/><text x="11" y="15.300" text-anchor="middle" font-family="Liberation Sans, sans-serif" font-weight="bold" font-size="11.500" fill="#ffffff">Ps</text></svg>
<div class="ind"></div>
<svg style="left:1715px;top:17px" width="18" height="14" viewBox="0 0 18 14" fill="none" stroke="#1b1b1b" stroke-width="1.500" stroke-linecap="round"><path d="M1.200 5 Q9 -1.800 16.800 5"/><path d="M4 7.800 Q9 3.200 14 7.800"/><path d="M6.600 10.400 Q9 8.200 11.400 10.400"/><circle cx="9" cy="12.400" r=".9" fill="#1b1b1b" stroke="none"/></svg>
<svg style="left:1740px;top:16px" width="17" height="16" viewBox="0 0 17 16" fill="none" stroke="#1b1b1b" stroke-width="1.200" stroke-linecap="round" stroke-linejoin="round"><path d="M1 5.600 L3.600 5.600 L7 2.400 L7 13.600 L3.600 10.400 L1 10.400Z"/><path d="M9.600 5.600 Q11 8 9.600 10.400"/><path d="M11.800 3.800 Q14.200 8 11.800 12.200"/><path d="M14 2 Q17.200 8 14 14"/></svg>
<svg style="left:1762px;top:15px" width="20" height="16" viewBox="0 0 20 16"><path d="M4.500 5 L17.500 5 Q18.600 5 18.600 6.100 L18.600 7.600 L19.600 7.600 L19.600 11 L18.600 11 L18.600 12.400 Q18.600 13.500 17.500 13.500 L3 13.500 Q1.900 13.500 2.200 12.400Z" fill="none" stroke="#1b1b1b" stroke-width="1.100"/><path d="M5.500 6.600 L16.900 6.600 L16.900 11.900 L3.900 11.900Z" fill="#1b1b1b"/><path d="M2.500 1 L6 1 L4.600 4.400 L7 4.400 L1.600 10.500 L2.900 6.200 L.8 6.200Z" fill="#1b1b1b" stroke="#eef0f6" stroke-width=".5"/></svg>
<div class="cl">周五02:07:43<br>2023/05/19</div>
</div>
</div><div class="win"><div class="wi">
<div class="tbar">
<svg style="left:7px;top:11px" width="14" height="14" viewBox="0 0 14 14"><rect width="14" height="14" rx="3" fill="#4a80ff"/><text x="7" y="10.200" text-anchor="middle" font-family="Liberation Sans, sans-serif" font-weight="bold" font-size="7.500" fill="#fff">Ps</text></svg>
<span class="tt">在线PS</span>
<svg style="left:1285px;top:9px" width="110" height="14" viewBox="0 0 110 14" fill="none" stroke="#2b2b2b" stroke-width="1"><path d="M0 5.500 L10 5.500"/><rect x="48.500" y=".500" width="9" height="9" rx="1.500"/><path d="M96 .500 L105 9.500 M105 .500 L96 9.500"/></svg>
</div>
<div class="app"></div>
<div class="mb">
<span style="left:9px">文件</span><span style="left:55px">编辑</span><span style="left:101px">图像</span><span style="left:147px">图层</span><span style="left:193px">选择</span><span style="left:239px">滤镜</span><span style="left:285px">视图</span><span style="left:331px">窗口</span><span style="left:377px">更多</span>
<svg style="left:419px;top:5px" width="22" height="22" viewBox="0 0 22 22" fill="none" stroke="#d6d6d6"><circle cx="8" cy="8" r="5.800" stroke-width="2.200"/><path d="M12.500 12.500 L19.500 19.500" stroke-width="3.200" stroke-linecap="round"/></svg>
</div>
<!-- options bar -->
<div class="ob" style="left:312px;top:73px;width:1410px;height:30px">
<svg style="left:12px;top:6px" width="21" height="20" viewBox="0 0 21 20"><path d="M1.500 1 L1.500 15 L5 11.800 L7.600 17.600 L9.800 16.600 L7.200 10.900 L12 10.600Z" fill="#d6d6d6"/><path d="M12 15.500 L20 15.500 M16 11.500 L16 19.500" stroke="#d6d6d6" stroke-width="1.300"/></svg>
</div>
<div class="cb" style="left:358.500px"></div><span class="ob" style="left:375px;top:81px"><span style="left:0;top:0">自动选择</span></span>
<div class="cb" style="left:444.500px"></div>
<div class="btn" style="left:628px;width:61px"></div><span class="ob" style="left:658.500px;top:81px"><span style="left:0;top:0;font-size:13px">PNG</span></span>
<div class="btn" style="left:694px;width:53px"></div><span class="ob" style="left:719px;top:81px"><span style="left:0;top:0;font-size:13px">SVG</span></span>
<svg style="left:697px;top:80px" width="18" height="19" viewBox="0 0 18 19" fill="#d8d8d8"><path d="M6.500 0 L11.500 0 L11.500 7 L16 7 L9 14.500 L2 7 L6.500 7Z"/><rect x="1.500" y="16" width="15" height="2"/></svg>
<svg style="left:631px;top:80px" width="18" height="19" viewBox="0 0 18 19" fill="#d8d8d8"><path d="M6.500 0 L11.500 0 L11.500 7 L16 7 L9 14.500 L2 7 L6.500 7Z"/><rect x="1.500" y="16" width="15" height="2"/></svg>
<!-- align icons -->
<svg style="left:768px;top:80px" width="240" height="22" viewBox="0 0 240 22" fill="none" stroke="#d0d0d0" stroke-width="1.300">
<path d="M1 1 L1 21"/><rect x="3.500" y="3" width="7" height="5.500" fill="#d0d0d0"/><rect x="3.500" y="12" width="12.500" height="6.500"/>
<path d="M39.500 1 L39.500 21"/><rect x="36" y="3.500" width="7" height="5" fill="#d0d0d0"/><rect x="33" y="12" width="13.500" height="6.500"/>
<path d="M77 1 L77 21"/><rect x="68" y="3" width="7" height="5.500" fill="#d0d0d0"/><rect x="62" y="12" width="13" height="6.500"/>
<path d="M93 1 L100 1 M93 21 L100 21 M93.600 1 L93.600 4 M99.400 1 L99.400 4 M93.600 18 L93.600 21 M99.400 18 L99.400 21"/><rect x="93.500" y="7.500" width="6" height="7"/>
<path d="M131 1.500 L151 1.500"/><rect x="133.500" y="4" width="6" height="13"/><rect x="143" y="4" width="5.500" height="7" fill="#d0d0d0"/>
<path d="M159 11.500 L180 11.500"/><rect x="162.500" y="4.500" width="6.500" height="14" fill="#474747"/><rect x="172" y="8.500" width="5.500" height="6" fill="#d0d0d0"/>
<path d="M188 20.500 L208 20.500"/><rect x="190.500" y="5.500" width="6.500" height="13"/><rect x="200.500" y="11" width="5.500" height="7.500" fill="#d0d0d0"/>
<path d="M217 8 L220 8 L220 15 L217 15 M236 8 L233 8 L233 15 L236 15"/><rect x="223.500" y="8" width="6" height="7"/>
</svg>
<!-- left tool column -->
<div class="dark" style="left:312px;top:103px;width:39px;height:11px"></div>
<span style="left:322px;top:103px;font-size:13px;line-height:18px;color:#e6e6e6;letter-spacing:.5px;white-space:nowrap">&gt; &lt;</span>
<div style="left:318px;top:118px;width:29px;height:28px;border-radius:4px;background:#363636"></div>
<svg class="tool" style="top:120.5px" width="28" height="28" viewBox="-1 -1 28 28"><path d="M1.500 1.500 L1.500 16.500 L5.200 13.200 L8 19.400 L10.300 18.300 L7.500 12.300 L12.300 12Z" fill="#cdcdcd"/><path d="M12 15.800 L20 15.800 M16 11.800 L16 19.800" stroke="#cdcdcd" stroke-width="1.300"/></svg>
<svg class="tool" style="top:152.0px" width="28" height="28" viewBox="-1 -1 28 28"><rect x="1" y="2.500" width="19.500" height="15.500" fill="none" stroke="#cdcdcd" stroke-width="1.400" stroke-dasharray="4.200 2.600"/><path d="M24.500 19.500 L24.500 24.500 L19.500 24.500Z" fill="#cdcdcd"/></svg>
<svg class="tool" style="top:184.0px" width="28" height="28" viewBox="-1 -1 28 28"><ellipse cx="11" cy="8" rx="9.800" ry="6.500" fill="none" stroke="#cdcdcd" stroke-width="1.300"/><path d="M6 11 Q10 11 9 14.500 Q8.500 17 6.500 16 Q9 19.500 9.800 19" fill="none" stroke="#cdcdcd" stroke-width="1.200"/><path d="M24.500 19.500 L24.500 24.500 L19.500 24.500Z" fill="#cdcdcd"/></svg>
<svg class="tool" style="top:215.5px" width="28" height="28" viewBox="-1 -1 28 28"><rect x="1.200" y="1.200" width="19.500" height="19.500" fill="none" stroke="#cdcdcd" stroke-width="1.300" stroke-dasharray="1.800 1.500"/><path d="M10 5.500 Q13 4 14.500 7 Q15.500 10 14.500 13 Q13 16.500 9.500 16.500 Q5.500 16.500 6 13.500 Q6.500 11.500 8.300 9.500 Q8.500 6.500 10 5.500Z" fill="#cdcdcd"/><path d="M24.500 19.500 L24.500 24.500 L19.500 24.500Z" fill="#cdcdcd"/></svg>
<svg class="tool" style="top:246.0px" width="28" height="28" viewBox="-1 -1 28 28"><path d="M5.500 0 L5.500 15.500 L21 15.500 M0 5 L15.500 5 L15.500 21" fill="none" stroke="#cdcdcd" stroke-width="2.200"/><path d="M24.500 19.500 L24.500 24.500 L19.500 24.500Z" fill="#cdcdcd"/></svg>
<svg class="tool" style="top:278.0px" width="28" height="28" viewBox="-1 -1 28 28"><path d="M2 20 L3 16.500 L11.500 7.500 L14 10 L5.500 19Z" fill="none" stroke="#cdcdcd" stroke-width="1.200"/><path d="M10 6 L16 12 L17.500 10.500 L15.800 8.800 L19.500 5.200 Q21 2.800 19.200 1.500 Q17.500 0 15.500 2 L12.800 5.200 L11.500 4.200Z" fill="#cdcdcd"/><path d="M24.500 19.500 L24.500 24.500 L19.500 24.500Z" fill="#cdcdcd"/></svg>
<div class="tl" style="top:307px"></div>
<svg class="tool" style="top:313.5px" width="28" height="28" viewBox="-1 -1 28 28"><g transform="rotate(40 10 11)"><rect x="0" y="6.500" width="20" height="9.500" rx="3" fill="none" stroke="#cdcdcd" stroke-width="1.400"/><rect x="6" y="6.500" width="8" height="9.500" fill="#cdcdcd" opacity=".55"/><path d="M6 6.500 L6 16 M14 6.500 L14 16" stroke="#cdcdcd" stroke-width="1"/></g><path d="M18 0 L19 2.500 L21.500 3.500 L19 4.500 L18 7 L17 4.500 L14.500 3.500 L17 2.500Z" fill="#cdcdcd"/><path d="M24.500 19.500 L24.500 24.500 L19.500 24.500Z" fill="#cdcdcd"/></svg>
<svg class="tool" style="top:346.5px" width="28" height="28" viewBox="-1 -1 28 28"><path d="M15.500 0.500 L20.500 4 L14.500 11.500 L10.500 8.500Z" fill="#cdcdcd"/><path d="M9.500 9.300 L13.800 12.600 Q14 17.500 9 19.800 Q5 21 1 20 Q4 18.500 4.500 15 Q5.500 10 9.500 9.300Z" fill="#cdcdcd"/><path d="M24.500 19.500 L24.500 24.500 L19.500 24.500Z" fill="#cdcdcd"/></svg>
<svg class="tool" style="top:377.0px" width="28" height="28" viewBox="-1 -1 28 28"><path d="M6 1.500 Q6 0 8 0 L13.500 0 Q15.500 0 15.500 1.500 L14.500 8.500 Q14.500 10 16 10.500 L19.500 11 L19.500 15.500 L2 15.500 L2 11 L5.500 10.500 Q7 10 7 8.500Z" fill="#cdcdcd"/><rect x="2" y="17.500" width="17.500" height="2.200" fill="#cdcdcd"/></svg>
<svg class="tool" style="top:409.0px" width="28" height="28" viewBox="-1 -1 28 28"><g transform="rotate(-45 10.500 11)"><rect x="0.500" y="5.500" width="20" height="11" rx="4" fill="none" stroke="#cdcdcd" stroke-width="1.400"/><path d="M10.500 5.500 L16.500 5.500 Q20.500 5.500 20.500 9.500 L20.500 12.500 Q20.500 16.500 16.500 16.500 L10.500 16.500Z" fill="#cdcdcd"/></g><path d="M24.500 19.500 L24.500 24.500 L19.500 24.500Z" fill="#cdcdcd"/></svg>
<svg class="tool" style="top:440px" width="28" height="28" viewBox="-1 -1 28 28"><defs><linearGradient id="tgrad" x1="0" x2="1" y1="0" y2="0"><stop offset="0" stop-color="#c8c8c8"/><stop offset="1" stop-color="#4a4a4a"/></linearGradient></defs><rect x="0" y="3" width="20" height="14.500" fill="url(#tgrad)"/><path d="M24.500 19.500 L24.500 24.500 L19.500 24.500Z" fill="#cdcdcd"/></svg>
<svg class="tool" style="top:472.5px" width="28" height="28" viewBox="-1 -1 28 28"><path d="M10.500 1 Q17.500 9.500 17.500 13.500 A7 7 0 0 1 3.500 13.500 Q3.500 9.500 10.500 1Z" fill="#cdcdcd"/><path d="M6 13 Q6 10.500 8 9" fill="none" stroke="#474747" stroke-width="1.500"/><path d="M24.500 19.500 L24.500 24.500 L19.500 24.500Z" fill="#cdcdcd"/></svg>
<svg class="tool" style="top:503.0px" width="28" height="28" viewBox="-1 -1 28 28"><circle cx="13.500" cy="7" r="6.800" fill="#cdcdcd"/><path d="M9 12 L1 20" stroke="#cdcdcd" stroke-width="1.800"/><path d="M24.500 19.500 L24.500 24.500 L19.500 24.500Z" fill="#cdcdcd"/></svg>
<div class="tl" style="top:531.500px"></div>
<span style="left:321px;top:533px;width:22px;text-align:center;font-family:'Liberation Serif',serif;font-weight:bold;font-size:29px;line-height:36px;color:#cdcdcd">T</span>
<svg class="tool" style="top:571.0px" width="28" height="28" viewBox="-1 -1 28 28"><path d="M11.500 5.500 L16 10 L12 16 L1.500 20 L5.500 9.500Z" fill="#cdcdcd"/><path d="M1.500 20 L8.500 13" stroke="#474747" stroke-width="1.200"/><circle cx="9.200" cy="12.300" r="1.500" fill="#474747"/><path d="M12.500 4.500 L15.500 1 L20.500 6 L17 9Z" fill="#cdcdcd"/><path d="M24.500 19.500 L24.500 24.500 L19.500 24.500Z" fill="#cdcdcd"/></svg>
<svg class="tool" style="top:603.0px" width="28" height="28" viewBox="-1 -1 28 28"><path d="M1 1 L1 16 L4.700 12.700 L7.500 18.900 L9.800 17.800 L7 11.800 L11.800 11.500Z" fill="#cdcdcd"/><path d="M15 2.500 L12 8.500 L18 16.500" fill="none" stroke="#cdcdcd" stroke-width="1"/><rect x="13.800" y="1" width="2.400" height="2.400" fill="#cdcdcd"/><rect x="10.800" y="7.300" width="2.400" height="2.400" fill="#cdcdcd"/><rect x="16.800" y="15.300" width="2.400" height="2.400" fill="#cdcdcd"/><path d="M24.500 19.500 L24.500 24.500 L19.500 24.500Z" fill="#cdcdcd"/></svg>
<svg class="tool" style="top:634.0px" width="28" height="28" viewBox="-1 -1 28 28"><rect x="0.500" y="3.500" width="20" height="14" fill="#cdcdcd"/><path d="M24.500 19.500 L24.500 24.500 L19.500 24.500Z" fill="#cdcdcd"/></svg>
<div class="tl" style="top:663px"></div>
<svg class="tool" style="top:672.0px" width="28" height="28" viewBox="-1 -1 28 28"><path d="M5.500 11.500 L5.500 4.500 Q5.500 3.200 6.700 3.200 Q7.900 3.200 7.900 4.500 L7.900 2.500 Q7.900 1.200 9.100 1.200 Q10.300 1.200 10.300 2.500 L10.300 3 Q10.300 1.800 11.500 1.800 Q12.700 1.800 12.700 3 L12.700 4.500 Q12.700 3.500 13.900 3.500 Q15.100 3.500 15.100 4.800 L15.100 13 Q15.100 19.500 9.500 19.500 Q6.500 19.500 4.500 16.500 L1 11.500 Q0.500 10 2 9.800 Q3.200 9.800 4 11Z" fill="#cdcdcd"/><path d="M7.900 4.500 L7.900 10 M10.300 3 L10.300 10 M12.700 4.500 L12.700 10" stroke="#474747" stroke-width=".7"/><path d="M24.500 19.500 L24.500 24.500 L19.500 24.500Z" fill="#cdcdcd"/></svg>
<svg class="tool" style="top:702.0px" width="28" height="28" viewBox="-1 -1 28 28"><circle cx="8" cy="8" r="6.200" fill="none" stroke="#cdcdcd" stroke-width="2.200"/><path d="M12.500 12.500 L20 20" stroke="#cdcdcd" stroke-width="3" stroke-linecap="round"/></svg>
<div style="left:316px;top:729.500px;width:32.500px;height:55px;background:#2b2b2b;border-radius:2px"></div>
<div style="left:318px;top:731.500px;width:29px;height:21px;background:#ff0000"></div>
<div style="left:318px;top:762px;width:29px;height:21px;background:#000"></div>
<div style="left:317.500px;top:751px;width:14px;height:18px;border-radius:3px;background:#565656"></div><div style="left:333.500px;top:751px;width:14.500px;height:18px;border-radius:3px;background:#565656"></div>
<svg style="left:319px;top:753px" width="11" height="14" viewBox="0 0 11 14" fill="none" stroke="#eee" stroke-width="1.200"><path d="M3 13 L3 1.500 M.800 4 L3 1.500 L5.200 4 M8 1 L8 12.500 M5.800 10 L8 12.500 L10.200 10"/></svg>
<span style="left:333.500px;top:751px;width:14.500px;text-align:center;font-size:13.500px;line-height:18px;color:#eee">D</span>
<svg style="left:322px;top:790px" width="21" height="14" viewBox="0 0 21 14"><rect width="21" height="14" fill="#cdcdcd"/><circle cx="10.500" cy="7" r="4" fill="#3a3a3a"/></svg>
<svg style="left:325px;top:814.500px" width="15" height="10" viewBox="0 0 15 10" fill="none" stroke="#cdcdcd" stroke-width="1"><rect x=".500" y=".500" width="14" height="9"/><path d="M2.500 3.200 L12.500 3.200 M2.500 5 L12.500 5 M2.500 6.800 L12.500 6.800"/></svg>
<!-- centre -->
<div class="mid" style="left:351px;top:103px;width:1061px;height:25px"></div>
<div class="dark" style="left:351px;top:128px;width:1061px;height:886px"></div>
<div class="tab" style="left:352px;width:85px"><span style="left:6px;top:0">123.psd</span><svg style="left:67px;top:6px" width="10" height="10" viewBox="0 0 10 10" stroke="#e4e4e4" stroke-width="1.800"><path d="M.800 .800 L9.200 9.200 M9.200 .800 L.800 9.200"/></svg></div>
<div style="left:437px;top:106px;width:1px;height:22px;background:#444"></div>
<div class="tab" style="left:438px;width:60px"><span style="left:6px;top:0">gjf.psd</span></div>
<!-- canvas -->
<div style="left:402px;top:301px;width:960px;height:540px;overflow:hidden"><div class="desk mini"><svg class="wp" viewBox="0 0 1920 1080" width="1920" height="1080" preserveAspectRatio="none">

<rect width="1920" height="1080" fill="url(#wpbg)"/>
<rect width="860" height="1080" fill="url(#wpwc)" mask="url(#wpm)"/>
<!-- shadow under the sheet at right -->
<path d="M1808 545 Q1770 660 1722 741 Q1650 880 1590 955 L1560 1010 L1660 1000 Q1740 900 1790 770 Q1822 660 1808 545Z" fill="#7640c6" opacity=".62" filter="url(#wpblur)"/>
<!-- soft glow left of light-blue sheet -->
<path d="M1437 143 L1130 470 L1040 500 L1000 380 L1170 150 L1380 20Z" fill="#8d5cee" opacity=".4" filter="url(#wpblur3)"/>
<path d="M1437 143 L1808 543 L1900 560 L1900 300 L1560 60Z" fill="#9c4be0" opacity=".35" filter="url(#wpblur3)"/>
<!-- light blue sheet -->
<path d="M1111 492 C1040 585 985 640 941 720 C900 790 860 865 830 940 C815 978 805 1005 796 1031 L780 1080 L1700 1080 L1339 713 Z" fill="url(#wplb)"/>
<!-- diamond sheet -->
<path d="M1437 143 L1808 543 Q1770 660 1722 741 Q1650 880 1590 955 L1339 713 L1111 492 Z" fill="url(#wpdia)"/>

<g clip-path="url(#wpdc)"><path d="M1437 120 L1090 492 L1150 540 L1480 190Z" fill="#a8b6ff" opacity=".22" filter="url(#wpblur2)"/><path d="M1808 543 L1722 741 L1590 955 L1500 900 L1700 520Z" fill="#b07cf8" opacity=".25" filter="url(#wpblur)"/></g>
<path d="M1111 492 C1040 585 985 640 941 720 C900 790 860 865 830 940 L870 940 C900 870 940 790 980 730 C1030 650 1090 590 1150 530Z" fill="#86b0ff" opacity=".25" filter="url(#wpblur2)"/>
<!-- dark curl -->

<g clip-path="url(#wpcc)">
<rect x="700" y="600" width="1100" height="500" fill="#26379a"/>
<ellipse cx="1560" cy="1120" rx="300" ry="170" fill="#8a5cd8" filter="url(#wpblur)"/>
<ellipse cx="1100" cy="1110" rx="360" ry="300" fill="#7f9af4" filter="url(#wpblur3)"/>
<ellipse cx="1040" cy="1090" rx="240" ry="120" fill="#7fa0f3" opacity=".8" filter="url(#wpblur)"/>
</g>
</svg>
<div class="dicon" style="left:0px;top:0.0px"><svg class="ico" viewBox="0 0 42 42" width="42" height="42" ><g transform="translate(-.700 .800)">
<rect x="1" y="6" width="32" height="24" rx="1.5" fill="#3c4250"/>
<rect x="2.2" y="7.2" width="29.6" height="18" fill="url(#g_scr)"/>
<rect x="1" y="26" width="32" height="4" fill="url(#g_sil)"/>
<path d="M13 30 L21 30 L22 34 L12 34Z" fill="#d4d7de"/><rect x="10.5" y="33.6" width="13" height="1.6" rx=".6" fill="#e4e6ea"/>
<rect x="25" y="18.5" width="12.5" height="16.5" rx="1.4" fill="#3b8cff" stroke="#cfd6e6" stroke-width="1"/>
<rect x="29" y="27.5" width="13.5" height="7.5" rx="1.4" fill="#3b8cff" stroke="#3c4250" stroke-width="1"/>
</g></svg><span>此电脑</span></div><div class="dicon" style="left:98px;top:0.0px"><svg class="ico" viewBox="0 0 42 42" width="42" height="42" >
<path d="M21 0 C31 0 36 .300 38.800 3.200 C41.700 6 42 11 42 21 C42 31 41.700 36 38.800 38.800 C36 41.700 31 42 21 42 C11 42 6 41.700 3.200 38.800 C.300 36 0 31 0 21 C0 11 .300 6 3.200 3.200 C6 .300 11 0 21 0Z" fill="url(#g_wht)"/>
<path d="M30.500 12 L42 24 L42 27 Q41.500 40.500 30 41.700 L24 41.900 L12 31Z" fill="#1a2a50" opacity=".07"/>
<circle cx="21.100" cy="21.400" r="12.400" fill="#f4f5f8" stroke="url(#g_ring)" stroke-width="1.800"/>
<path d="M17.200 15.600 L26.900 12.700 L26.900 24.300 A2.800 2.200 0 1 1 25.200 22.300 L25.200 16.300 L18.900 18.200 L18.900 26.700 A2.800 2.200 0 1 1 17.200 24.700Z" fill="url(#g_note)"/>
</svg><span>在线音乐</span></div><div class="dicon" style="left:196px;top:0.0px"><svg class="ico" viewBox="0 0 42 42" width="42" height="42" >
<rect x="0" y="0" width="42" height="42" rx="10.300" fill="url(#g_store)"/>
<g fill="#fff"><path d="M20.200 8.200 Q21.200 7.500 21.900 8.700 L30.300 32.400 Q30.700 34.800 28.800 35.100 Q27 35.300 26.200 33.200Z"/>
<path d="M17.800 14.400 L15.600 20.800" stroke="#fff" stroke-width="3.600" stroke-linecap="round"/>
<path d="M11.900 26.900 L15.900 25.700 Q15.200 31.200 11.500 35.100 Q10.500 33 11.900 26.900Z"/>
<path d="M5.300 24.200 L9.300 19.300 L9.600 22.100 Q15 20.500 19.600 20.300 Q22.200 20.600 23 26.800 Q20.500 23.600 18.500 23.500 Q14 24 9.800 25.400 L10 28.300Z"/>
<path d="M36.300 22 L31.600 18.100 L31.600 20.700 Q29.500 21.100 28.200 22.700 L29.300 25.500 Q30.500 24.200 32.200 24 L32.600 26.900Z"/></g>
</svg><span>商店管理</span></div><div class="dicon" style="left:0px;top:130.1px"><svg class="ico" viewBox="0 0 42 42" width="42" height="42" >
<path d="M5.300 6 L34.700 6 L30.600 36.300 Q20 42.600 9.400 36.300Z" fill="url(#g_bin)"/>
<ellipse cx="20" cy="34.400" rx="10.300" ry="4.400" fill="#22479a"/>
<path d="M9.600 36.700 Q20 42.600 30.400 36.700" fill="none" stroke="#efe6e4" stroke-width=".9" opacity=".85"/>
<ellipse cx="20" cy="6" rx="14.700" ry="3.400" fill="#e4eaf6" stroke="#3b7df0" stroke-width="1.100"/>
<path d="M9 6.500 L11 3 L14.500 3.800 L16.500 .800 L20 1.800 L23 -.300 L25 2.500 L27.500 1.500 L29 4 L31.500 6.300 Q20 10.500 9 6.500Z" fill="#f6f7fa" stroke="#c4cad6" stroke-width=".5"/>
<path d="M16.500 .800 L18 5 M23 -.300 L22 5.500 M27.500 1.500 L25.500 6" stroke="#c9ced8" stroke-width=".5" fill="none"/>
<g fill="none" stroke="#fff" stroke-width="2.900"><path d="M16.33 17.55 A4.7 4.7 0 0 1 22.39 15.64"/><path d="M24.47 17.55 A4.7 4.7 0 0 1 23.10 23.75"/><path d="M20.40 24.60 A4.7 4.7 0 0 1 15.72 20.31"/></g>
</svg><span>回收站</span></div><div class="dicon" style="left:98px;top:130.1px"><svg class="ico" viewBox="0 0 42 42" width="42" height="42" >
<rect x="0" y="0" width="42" height="42" rx="10.300" fill="url(#g_wb)"/>
<path d="M6 36.5 L36 36.5" stroke="#ffd0e8" stroke-width="1.6" opacity=".75"/><path d="M5 33.5 L37 33.5" stroke="#ffd8ee" stroke-width="1.8" opacity=".9"/>
<path d="M11.5 18.5 L30.5 18.5 L38.5 28 L38.5 30 L3.5 30 L3.5 28Z" fill="#f4f4f8"/><path d="M3.5 28 L38.5 28 L38.5 30 L3.5 30Z" fill="#d9dae2"/>
<path d="M14.5 21 L24 21 M13.5 23 L27 23 M11.5 25.2 L21 25.2" stroke="#9ea2b0" stroke-width=".8"/>
<path d="M31.2 4.5 Q33 3.6 34.3 5 L25 23.3 L22.3 25 L22.6 22Z" fill="#fff"/><circle cx="22.2" cy="24.8" r=".9" fill="#333"/>
</svg><span>在线白板</span></div><div class="dicon" style="left:196px;top:130.1px"><svg class="ico" viewBox="0 0 42 42" width="42" height="42" >
<rect x="0" y="0" width="42" height="42" rx="10.300" fill="url(#g_girl)"/>
<path d="M32.400 29.200 L26.960 29.840 A10.300 10.300 0 1 1 30.730 24.920" fill="none" stroke="#fff" stroke-width="3" stroke-linecap="round"/>
<path d="M21.050 24.600 L17.300 20.800 A2.150 2.150 0 0 1 21.050 18.800 A2.150 2.150 0 0 1 24.800 20.800Z" fill="#fff"/>
</svg><span>美女视频</span></div><div class="dicon" style="left:0px;top:260.1px"><svg class="ico" viewBox="0 0 42 42" width="42" height="42" ><g transform="translate(-2.200 -1.500) scale(1.065)">
<path d="M29.5 14 Q29.5 9 33 14 L33.5 20" fill="none" stroke="#10307e" stroke-width="1.8"/>
<path d="M24 18.5 L38.5 18.5 L41.5 41 L24 41Z" fill="#00c878"/>
<path d="M9 12 Q9 2 15.5 2 Q22 2 22 12" fill="none" stroke="#0c3488" stroke-width="2.2"/>
<path d="M1.5 9.5 L15.5 9.5 L15.5 41.5 L6 41.5 Q1.5 41.5 1.5 37Z" fill="#4a90ff"/><path d="M15.5 9.5 L29.5 9.5 L29.5 37 Q29.5 41.5 25 41.5 L15.5 41.5Z" fill="#5058d8"/>
<g fill="#fff"><rect x="7" y="19" width="7.4" height="7.4" rx="1"/><rect x="16.4" y="19" width="7.4" height="7.4" rx="1"/><rect x="7" y="28.2" width="7.4" height="7.4" rx="1"/><rect x="16.4" y="28.4" width="7.4" height="1.5"/><rect x="16.4" y="31.2" width="7.4" height="1.5"/><rect x="16.4" y="34" width="7.4" height="1.5"/></g>
</g></svg><span>应用商店</span></div><div class="dicon" style="left:98px;top:260.1px"><svg class="ico" viewBox="0 0 42 42" width="42" height="42" >
<path fill-rule="evenodd" d="M21 -.300 A21.300 21.300 0 1 1 20.990 -.300Z M21 12.600 A8.400 8.400 0 1 0 21.010 12.600Z" fill="url(#g_disc)"/>
<path d="M6 13 A17 17 0 0 1 33.5 9" fill="none" stroke="#fff" stroke-width=".9" opacity=".95"/><path d="M7.6 14 A15 15 0 0 1 32 10.4" fill="none" stroke="#fff" stroke-width=".9" opacity=".85"/>
<path d="M34 30 L40.5 19 L41 23 L36.5 31Z" fill="#4aa0f8" opacity=".8"/><circle cx="21" cy="21" r=".8" fill="#e070a8"/>
</svg><span>音乐播放器</span></div><div class="dicon" style="left:196px;top:260.1px"><svg class="ico" viewBox="0 0 42 42" width="42" height="42" >
<clipPath id="c_calcm"><rect x="0" y="0" width="42" height="42" rx="8.500"/></clipPath>
<g clip-path="url(#c_calcm)"><rect x="0" y="0" width="21" height="21" fill="#f8f8f8"/><rect x="21" y="0" width="21" height="21" fill="#ffc933"/><rect x="0" y="21" width="21" height="21" fill="#ededed"/><rect x="21" y="21" width="21" height="21" fill="#ffa126"/></g>
<path d="M7 10.5 L14 10.5 M10.5 7 L10.5 14" stroke="#666" stroke-width="1.5"/><path d="M28 10.5 L35 10.5" stroke="#fff" stroke-width="1.6"/>
<path d="M8 27.500 L10.500 31 L13 27.500 M10.500 31 L10.500 35.500 M8 31.300 L13 31.300 M8 33.400 L13 33.400" stroke="#666" stroke-width="1.200" fill="none"/>
<path d="M28 29.5 L35 29.5 L32.5 27.3 M35 33.5 L28 33.5 L30.500 35.7" stroke="#fff" stroke-width="1.5" fill="none"/>
</svg><span>计算器</span></div><div class="dicon" style="left:0px;top:390.2px"><svg class="ico" viewBox="0 0 42 42" width="42" height="42" >
<circle cx="21" cy="21" r="21" fill="url(#g_globe)"/>
<g fill="#4a84ea" opacity=".75">
<path d="M20 3.500 Q16.500 7 15.500 11.500 Q18 11 20 11Z"/><path d="M22 3.500 Q25.500 7 26.500 11.500 Q24 11 22 11Z"/>
<path d="M13 6 Q8 9 6 13.500 Q9.500 12.500 13 12 Q13.500 8.500 16 5Z"/><path d="M29 6 Q34 9 36 13.500 Q32.500 12.500 29 12 Q28.500 8.500 26 5Z"/>
<path d="M4 17.500 Q3 21 4 25 Q8 23.500 12.500 21 Q8 18.500 4 17.500Z"/><path d="M38 17.500 Q39 21 38 25 Q34 23.500 29.500 21 Q34 18.500 38 17.500Z"/>
<path d="M13 36 Q8 33 6 28.500 Q9.500 29.500 13 30 Q13.500 33.500 16 37Z"/><path d="M29 36 Q34 33 36 28.500 Q32.500 29.500 29 30 Q28.500 33.500 26 37Z"/>
<path d="M20 38.500 Q16.500 35 15.500 30.500 Q18 31 20 31Z"/><path d="M22 38.500 Q25.500 35 26.500 30.500 Q24 31 22 31Z"/>
<path d="M15 14 Q18 13 20 13 L20 20 L15 20Z"/><path d="M27 14 Q24 13 22 13 L22 20 L27 20Z"/><path d="M15 28 Q18 29 20 29 L20 22 L15 22Z"/><path d="M27 28 Q24 29 22 29 L22 22 L27 22Z"/>
</g>
<path d="M12.600 13 L27.200 15.600 L23.200 19 L30.800 26.300 L26.800 30.300 L19.300 22.700 L15.400 26.300Z" fill="#c4d6fa"/>
<path d="M12.600 12.300 L27 15 L23 18.300 L30.300 25.600 L26.600 29.300 L19.300 22 L15.300 25.500Z" fill="#eef4ff"/>
</svg><span>Microsoft<br>Edge</span></div><div class="dicon" style="left:98px;top:390.2px"><svg class="ico" viewBox="0 0 42 42" width="42" height="42" >
<rect x="0" y="0" width="42" height="42" rx="10.300" fill="url(#g_album)"/>
<rect x="26.500" y="26.200" width="9" height="9" fill="#3f86f5" stroke="#cfe0ff" stroke-width=".8" opacity=".8"/>
<rect x="15.800" y="15.600" width="16.500" height="16" fill="#2a7aff" stroke="#e6efff" stroke-width="1"/>
<rect x="6" y="6.500" width="22.300" height="21.200" fill="#fff"/><rect x="7.300" y="7.800" width="19.700" height="18.600" fill="none" stroke="#4aa0f5" stroke-width=".6"/>
<path d="M8 25.800 L13.200 18.200 L15.800 22 L20.500 12.800 L26.500 25.800Z" fill="url(#g_mtn)"/><circle cx="13.200" cy="13" r="2.700" fill="#0a78e8"/>
</svg><span>相册</span></div><div class="dicon" style="left:196px;top:390.2px"><svg class="ico" viewBox="0 0 42 42" width="42" height="42" >
<rect x="0" y="0" width="42" height="42" rx="10.300" fill="url(#g_bolt)"/>
<path d="M34.800 7.100 L22.700 18.700 L19.400 13.500 L6.700 35 L19 23.400 L22.800 29.500Z" fill="#fff"/>
</svg><span>激活码生成</span></div><div class="dicon" style="left:0px;top:520.2px"><svg class="ico" viewBox="0 0 42 42" width="42" height="42" >
<g stroke-width="1.600" stroke-linejoin="round">
<path d="M21.300 22.800 L41.800 31.300 L21.300 39.900 L.800 31.300Z" fill="url(#g_oo3)" stroke="url(#g_oo3)"/>
<path d="M21.300 12.600 L41.800 20.800 L21.300 28.900 L.800 20.800Z" fill="url(#g_oo2)" stroke="url(#g_oo2)"/>
<path d="M21.300 1.400 L41.800 10 L21.300 18.700 L.800 10Z" fill="url(#g_oo1)" stroke="url(#g_oo1)"/></g>
</svg><span>OnlyOffice</span></div><div class="dicon" style="left:98px;top:520.2px"><svg class="ico" viewBox="0 0 42 42" width="42" height="42" >
<rect x="0" y="0" width="42" height="42" rx="10.300" fill="url(#g_txt)"/>
<path d="M13.600 14.100 L28.300 14.100 M20.900 14.100 L20.900 31.500" stroke="#fff" stroke-width="4.500" stroke-linecap="round" fill="none"/>
</svg><span>文本编辑器</span></div><div class="dicon" style="left:196px;top:520.2px"><svg class="ico" viewBox="0 0 42 42" width="42" height="42" >
<path d="M-.300 5.500 Q-.300 3 2.200 3 L14.800 3 Q16.800 3 17.800 5 L20 10 L-.300 10Z" fill="#3868f5"/>
<rect x="-.300" y="9.500" width="43" height="30" rx="2.500" fill="#3f8eff"/>
<g transform="translate(-1 -.300)"><rect x="30.5" y="30.5" width="10.300" height="10.300" rx="1" fill="#1c1c1c" stroke="#8a8a8a" stroke-width=".8"/><path d="M33 38 C33 35 34.5 34 36.5 34 L36.5 32.3 L39.3 35 L36.5 37.6 L36.5 36 C35 36 34 36.5 33 38Z" fill="#fff"/></g></svg><span>电影</span></div><div class="dicon" style="left:0px;top:650.2px"><svg class="ico" viewBox="0 0 42 42" width="42" height="42" >
<path d="M2.500 2 Q13 4.500 19.500 12.500 L21 16 L21 34 L2.500 28Z" fill="#e6f4ff"/><path d="M39.500 2 Q29 4.500 22.500 12.500 L21 16 L21 34 L39.500 28Z" fill="#e6f4ff"/>
<path d="M0 7.500 L2.800 7.500 Q13 10.500 21 13 Q29 10.500 39.200 7.500 L42 7.500 L42 34 L25 38.800 Q21 40.300 17 38.800 L0 34Z" fill="url(#g_book)"/>
<path d="M21 18 L21 33.500" stroke="#e4f2ff" stroke-width="2.300" stroke-linecap="round"/>
</svg><span>Epub阅读器</span></div><div class="dicon" style="left:98px;top:650.2px"><svg class="ico" viewBox="0 0 42 42" width="42" height="42" >
<rect x="0" y="0" width="42" height="42" rx="10.300" fill="url(#g_pe)"/>
<circle cx="20.500" cy="17.400" r="8.300" fill="none" stroke="#fff" stroke-width="4.400"/><path d="M12.100 17.400 L12.100 32.800" stroke="#fff" stroke-width="4.400" stroke-linecap="round"/>
</svg><span>图片编辑器</span></div><div class="dicon" style="left:196px;top:650.2px"><svg class="ico" viewBox="0 0 42 42" width="42" height="42" >
<rect x="0" y="0" width="42" height="42" rx="10.300" fill="url(#g_ver)"/>
<path fill-rule="evenodd" d="M7.500 7 L21.500 7 Q36 7.500 36 20.500 Q36 33.600 21.500 34.100 L7.500 34.100Z M13.200 13.200 L13.200 26 L28.200 26 L28.200 14.700 L19.900 14.700 L18.400 13.200Z" fill="#fff"/>
</svg><span>版本管理</span></div><div class="dicon" style="left:0px;top:780.3px"><svg class="ico" viewBox="0 0 42 42" width="42" height="42" >
<rect x=".600" y=".600" width="40.800" height="40.800" rx="8.500" fill="#000" stroke="#9aa3a6" stroke-width="1.100"/><rect x="3.400" y="3.400" width="35.200" height="35.200" rx="6.200" fill="#141b1e"/>
<text x="5.800" y="15.600" font-family="Liberation Mono, monospace" font-size="10.500" fill="#17c11a">$</text><rect x="13" y="7" width="4.200" height="8.800" fill="#0a7812"/>
<path d="M7 21.500 L14.500 27 L7 32.500" fill="none" stroke="#fff" stroke-width="1.900"/><path d="M16.500 31.800 L33.500 31.800" stroke="#fff" stroke-width="2"/>
</svg><span>终端</span></div><div class="dicon" style="left:98px;top:780.3px"><svg class="ico" viewBox="0 0 42 42" width="42" height="42" ><g transform="translate(-.800 0)">
<path d="M20.800 .800 L38.700 10.900 L20.800 20.500 L3.300 10.900Z" fill="url(#g_tf1)"/>
<path d="M38.700 10.900 L38.700 31.900 L20.800 41.800 L20.800 30.300 L31 24.600 L31 15Z" fill="#1450e0"/>
<path d="M20.800 30.300 L31 24.600 L38.700 31.900 L20.800 41.800Z" fill="#1a4ace"/>
<path d="M3.300 20.600 L11 16.400 L20.800 21.300 L20.800 30.300Z" fill="url(#g_tf2)"/>
<path d="M3.300 31.700 L11 27.200 L20.800 31.100 L20.800 41.800Z" fill="url(#g_tf2)"/>
</g></svg><span>腾飞Office</span></div><div class="dicon" style="left:196px;top:780.3px"><svg class="ico" viewBox="0 0 42 42" width="42" height="42" >
<path d="M3.600 37.300 L21.500 7.300 L37.500 34.500" fill="none" stroke="#76d2c0" stroke-width="3.400" stroke-linecap="round" stroke-linejoin="round" opacity=".62"/>
<path d="M22.400 23 L13.700 36.800" stroke="#1aa6e2" stroke-width="3.300" stroke-linecap="round" opacity=".85"/><path d="M22.300 37.300 L26.800 30.300 L31 37.300Z" fill="#76d2c0" opacity=".7"/>
<g transform="translate(-1 -.300)"><rect x="30.5" y="30.5" width="10.300" height="10.300" rx="1" fill="#1c1c1c" stroke="#8a8a8a" stroke-width=".8"/><path d="M33 38 C33 35 34.5 34 36.5 34 L36.5 32.3 L39.3 35 L36.5 37.6 L36.5 36 C35 36 34 36.5 33 38Z" fill="#fff"/></g></svg><span>(admin)Alist资<br>源站</span></div><div class="dicon" style="left:0px;top:910.4px"><svg class="ico" viewBox="0 0 42 42" width="42" height="42" >
<rect x="2.500" y="2.500" width="37" height="37" rx="7.500" fill="url(#g_ps)" stroke="#3f63d0" stroke-width=".8"/>
<text x="21" y="28" text-anchor="middle" font-family="Liberation Sans, sans-serif" font-weight="bold" font-size="20.500" fill="#60b4f6" textLength="24" lengthAdjust="spacingAndGlyphs">Ps</text>
</svg><span>在线PS</span></div><div class="dicon" style="left:98px;top:910.4px"><svg class="ico" viewBox="0 0 42 42" width="42" height="42" >
<path d="M12 33.500 L33.500 21" stroke="#14dcf4" stroke-width="8.500" stroke-linecap="round" fill="none"/>
<path d="M9 6.500 L33.500 20.200" stroke="url(#g_vp2)" stroke-width="8.500" stroke-linecap="round" fill="none"/>
<path d="M7.500 5 L7.500 37.500" stroke="url(#g_vp1)" stroke-width="9" stroke-linecap="round" fill="none"/>
</svg><span>视频播放器</span></div><div class="tb">
<svg style="left:20px;top:12px" width="24" height="24" viewBox="0 0 24 24"><rect x="1" y="2" width="11" height="18" fill="#bfdcf8"/><rect x="2.500" y="3.500" width="8" height="2.500" fill="#3d8cf0"/><rect x="12" y="0" width="8" height="20" fill="#1a8cf0"/><rect x="14" y="15" width="4" height="1.500" fill="#bfdcf8"/><rect x="0" y="20" width="24" height="4" fill="#3040b0"/><rect x="2" y="20.500" width="1.500" height="3" fill="#f0c020"/></svg>
<svg style="left:947px;top:13px" width="22" height="22" viewBox="0 0 22 22"><rect x="0" y="0" width="10" height="10" rx="1" fill="#5fcaee"/><rect x="12" y="0" width="10" height="10" rx="1" fill="#4a9cf8"/><rect x="0" y="12" width="10" height="10" rx="1" fill="#5fcaee"/><rect x="12" y="12.500" width="10" height="1.800" fill="#4a9cf8"/><rect x="12" y="16.200" width="10" height="1.800" fill="#4a9cf8"/><rect x="12" y="19.900" width="10" height="1.800" fill="#4a9cf8"/></svg>
<div style="position:absolute;left:1708px;top:4px;width:80px;height:40px;border-radius:5px;background:rgba(255,255,255,.7)"></div>
<svg style="left:1715px;top:17px" width="18" height="14" viewBox="0 0 18 14" fill="none" stroke="#1b1b1b" stroke-width="1.500" stroke-linecap="round"><path d="M1.200 5 Q9 -1.800 16.800 5"/><path d="M4 7.800 Q9 3.200 14 7.800"/><path d="M6.600 10.400 Q9 8.200 11.400 10.400"/><circle cx="9" cy="12.400" r=".9" fill="#1b1b1b" stroke="none"/></svg>
<svg style="left:1740px;top:16px" width="17" height="16" viewBox="0 0 17 16" fill="none" stroke="#1b1b1b" stroke-width="1.200" stroke-linecap="round" stroke-linejoin="round"><path d="M1 5.600 L3.600 5.600 L7 2.400 L7 13.600 L3.600 10.400 L1 10.400Z"/><path d="M9.600 5.600 Q11 8 9.600 10.400"/><path d="M11.800 3.800 Q14.200 8 11.800 12.200"/><path d="M14 2 Q17.200 8 14 14"/></svg>
<svg style="left:1762px;top:15px" width="20" height="16" viewBox="0 0 20 16"><path d="M4.500 5 L17.500 5 Q18.600 5 18.600 6.100 L18.600 7.600 L19.600 7.600 L19.600 11 L18.600 11 L18.600 12.400 Q18.600 13.500 17.500 13.500 L3 13.500 Q1.900 13.500 2.200 12.400Z" fill="none" stroke="#1b1b1b" stroke-width="1.100"/><path d="M5.500 6.600 L16.900 6.600 L16.900 11.900 L3.900 11.900Z" fill="#1b1b1b"/><path d="M2.500 1 L6 1 L4.600 4.400 L7 4.400 L1.600 10.500 L2.900 6.200 L.8 6.200Z" fill="#1b1b1b" stroke="#eef0f6" stroke-width=".5"/></svg>
<div class="cl">周五01:59:28<br>2023/05/19</div>
</div>
<div class="qs">
<div class="qb on" style="left:20px;top:19px"><svg width="16" height="12" viewBox="0 0 18 14" fill="none" stroke="#fff" stroke-width="1.500" stroke-linecap="round"><path d="M1.200 5 Q9 -1.800 16.800 5"/><path d="M4 7.800 Q9 3.200 14 7.800"/><path d="M6.600 10.400 Q9 8.200 11.400 10.400"/><circle cx="9" cy="12.400" r=".9" fill="#fff" stroke="none"/></svg></div>
<div class="qb on" style="left:131px;top:19px"><svg width="10" height="14" viewBox="0 0 10 14" fill="none" stroke="#fff" stroke-width="1.100"><path d="M1.500 4 L8 10 L5 12.800 L5 1.200 L8 4 L1.500 10"/></svg></div>
<div class="qb" style="left:242px;top:19px"><svg width="16" height="12" viewBox="0 0 16 12" fill="none" stroke="#222" stroke-width="1.200"><path d="M4 10.500 Q1 10.500 1 8 Q1 5.500 4 5.500 Q4.500 1.500 8 1.500 Q11.500 1.500 12 5.500 Q15 5.500 15 8 Q15 10.500 12 10.500Z"/></svg></div>
<span class="ql" style="left:20px;top:78px">WLAN</span><span class="ql" style="left:131px;top:78px">蓝牙</span><span class="ql" style="left:242px;top:78px">网盘模式</span>
<div class="qb on" style="left:20px;top:114px"><svg width="12" height="16" viewBox="0 0 12 16" fill="none" stroke="#fff" stroke-width="1.200"><circle cx="6" cy="6" r="4.200"/><path d="M6 4 L6 15"/></svg></div>
<div class="qb" style="left:131px;top:114px"><svg width="14" height="14" viewBox="0 0 14 14" fill="none" stroke="#222" stroke-width="1.100"><circle cx="7" cy="7" r="5"/><circle cx="7" cy="7" r="2"/></svg></div>
<div class="qb" style="left:242px;top:114px"><svg width="16" height="16" viewBox="0 0 16 16" fill="none" stroke="#222" stroke-width="1.100"><circle cx="8" cy="8" r="3" fill="#222"/><path d="M8 1 L8 3 M8 13 L8 15 M1 8 L3 8 M13 8 L15 8 M3 3 L4.500 4.500 M11.500 11.500 L13 13 M3 13 L4.500 11.500 M11.500 4.500 L13 3"/></svg></div>
<span class="ql" style="left:20px;top:174px">节能模式</span><span class="ql" style="left:131px;top:174px">主题</span><span class="ql" style="left:242px;top:174px">护眼模式</span>
<svg style="position:absolute;left:28px;top:242px" width="18" height="18" viewBox="0 0 16 16" fill="none" stroke="#222" stroke-width="1.100"><circle cx="8" cy="8" r="3"/><path d="M8 1 L8 3 M8 13 L8 15 M1 8 L3 8 M13 8 L15 8 M3 3 L4.500 4.500 M11.500 11.500 L13 13 M3 13 L4.500 11.500 M11.500 4.500 L13 3"/></svg>
<div class="qt" style="top:249px"></div><div class="qh" style="top:243px"></div>
<svg style="position:absolute;left:28px;top:293px" width="19" height="18" viewBox="0 0 17 16" fill="none" stroke="#222" stroke-width="1.200" stroke-linecap="round" stroke-linejoin="round"><path d="M1 5.600 L3.600 5.600 L7 2.400 L7 13.600 L3.600 10.400 L1 10.400Z"/><path d="M9.600 5.600 Q11 8 9.600 10.400"/><path d="M11.800 3.800 Q14.200 8 11.800 12.200"/><path d="M14 2 Q17.200 8 14 14"/></svg>
<div class="qt" style="top:300px"></div><div class="qh" style="top:294px"></div>
<div class="qf"><svg style="position:absolute;left:17px;top:14px" width="20" height="16" viewBox="0 0 20 16"><path d="M4.500 5 L17.500 5 Q18.600 5 18.600 6.100 L18.600 7.600 L19.600 7.600 L19.600 11 L18.600 11 L18.600 12.400 Q18.600 13.500 17.500 13.500 L3 13.500 Q1.900 13.500 2.200 12.400Z" fill="none" stroke="#1b1b1b" stroke-width="1.100"/><path d="M5.500 6.600 L16.900 6.600 L16.900 11.900 L3.900 11.900Z" fill="#1b1b1b"/><path d="M2.500 1 L6 1 L4.600 4.400 L7 4.400 L1.600 10.500 L2.900 6.200 L.8 6.200Z" fill="#1b1b1b"/></svg><span style="position:absolute;left:42px;top:17px;font-size:12px;line-height:16px;color:#222">100%</span></div>
</div>
</div></div>
<!-- right columns -->
<div class="mid" style="left:1412px;top:103px;width:310px;height:911px"></div>
<div class="dark" style="left:1413px;top:103px;width:39px;height:11px"></div>
<div class="ncol" style="left:1413px;top:114px;width:39px;height:900px;background:#474747"></div>
<span style="left:1421.500px;top:103.500px;font-size:13px;line-height:18px;color:#e6e6e6;letter-spacing:.5px;white-space:nowrap">&lt; &gt;</span>
<div class="ncol"><span style="top:121px">信息</span><span style="top:147px">属性</span><span style="top:178px">笔刷</span><span style="top:208px">字符</span><span style="top:234px">段落</span><span style="top:265px;font-size:13.500px;letter-spacing:-.4px">CSS</span><span style="top:292px;left:1434.500px;font-size:12px">图</span></div>
<div style="left:1418.500px;top:292px;width:15.500px;height:15.500px;border:1px solid #d0d0d0"></div>
<div class="nl" style="top:170px"></div><div class="nl" style="top:200px"></div><div class="nl" style="top:257px"></div><div class="nl" style="top:315px"></div>
<!-- history panel -->
<div class="dark" style="left:1456px;top:103px;width:266px;height:11px"></div>
<span style="left:1578px;top:103.500px;font-size:13px;line-height:18px;color:#e6e6e6;letter-spacing:.5px;white-space:nowrap">&gt; &lt;</span>
<div class="ptab on" style="left:1456px;top:117px;width:62px;height:22px">历史记录</div>
<div class="ptab off" style="left:1518px;top:117px;width:38px;height:22px">取样</div>
<div style="left:1456px;top:139px;width:255px;height:160px;background:#474747"></div>
<div class="mid" style="left:1456px;top:139px;width:255px;height:25px"></div>
<span style="left:1460px;top:144px;font-size:13.200px;line-height:18px;color:#e0e0e0">打开</span>
<!-- layers panel -->
<div class="ptab on" style="left:1456px;top:303px;width:36px;height:22px">图层</div>
<div class="ptab off" style="left:1492px;top:303px;width:38px;height:22px">通道</div>
<div class="ptab off" style="left:1530px;top:303px;width:38px;height:22px">路径</div>
<div style="left:1456px;top:325px;width:266px;height:59px;background:#474747"></div>
<div class="lp">
<div style="left:1460px;top:329.500px;width:74px;height:23px;border-radius:3px;background:#5e5e5e;box-shadow:0 1px 0 #3a3a3a"></div>
<span style="left:1465px;top:332px;font-size:14px">正常</span>
<svg style="left:1518px;top:338px" width="11" height="7" viewBox="0 0 11 7"><path d="M0 0 L11 0 L5.500 6Z" fill="#e0e0e0"/></svg>
<span style="left:1540px;top:332px">透明度:</span>
<div class="fld" style="left:1584px;top:329.500px;width:43px;height:23px">100%</div>
<svg style="left:1630px;top:336px" width="11" height="10" viewBox="0 0 11 10"><path d="M0 0 L11 0 L5.500 10Z" fill="#e0e0e0"/></svg>
<span style="left:1458px;top:359px;font-size:14px">Lock:</span>
<svg style="left:1497px;top:360px" width="18" height="18" viewBox="0 0 18 18"><rect width="18" height="18" fill="#d4d4d4"/><g fill="#3a3a3a"><rect x="0" y="0" width="4.500" height="4.500"/><rect x="9" y="0" width="4.500" height="4.500"/><rect x="4.500" y="4.500" width="4.500" height="4.500"/><rect x="13.500" y="4.500" width="4.500" height="4.500"/><rect x="0" y="9" width="4.500" height="4.500"/><rect x="9" y="9" width="4.500" height="4.500"/><rect x="4.500" y="13.500" width="4.500" height="4.500"/><rect x="13.500" y="13.500" width="4.500" height="4.500"/></g><rect x=".500" y=".500" width="17" height="17" fill="none" stroke="#d4d4d4"/></svg>
<svg style="left:1521px;top:358px" width="20" height="20" viewBox="0 0 20 20" fill="#cfcfcf"><path d="M14.500 1 Q16 .200 17.500 2 L19 4.500 L10.500 11.500 L7.500 8.500Z"/><path d="M6.600 9.600 L9.600 12.600 Q9.500 16.500 5.500 18.500 Q3 19.500 .500 19.500 Q3 17 3.500 14 Q4 10.500 6.600 9.600Z"/></svg>
<svg style="left:1544px;top:359px" width="20" height="20" viewBox="0 0 20 20" fill="none" stroke="#cfcfcf" stroke-width="1.500"><path d="M10 1.500 L10 18.500 M1.500 10 L18.500 10"/><path d="M7.500 4 L10 1.200 L12.500 4 M7.500 16 L10 18.800 L12.500 16 M4 7.500 L1.200 10 L4 12.500 M16 7.500 L18.800 10 L16 12.500" stroke-linejoin="round"/></svg>
<svg style="left:1569px;top:358px" width="18" height="21" viewBox="0 0 18 21"><path d="M4.500 9 L4.500 6 Q4.500 1.500 9 1.500 Q13.500 1.500 13.500 6 L13.500 9" fill="none" stroke="#cfcfcf" stroke-width="2.200"/><rect x="1" y="8.500" width="16" height="11.500" rx="1.500" fill="#cfcfcf"/></svg>
<span style="left:1596px;top:359px">填充:</span>
<div class="fld" style="left:1627px;top:357px;width:43px;height:23px">100%</div>
<svg style="left:1673px;top:363px" width="11" height="10" viewBox="0 0 11 10"><path d="M0 0 L11 0 L5.500 10Z" fill="#e0e0e0"/></svg>
</div>
<div style="left:1456px;top:383.500px;width:266px;height:1px;background:#3a3a3a"></div>
<div style="left:1456px;top:384.500px;width:255px;height:596.500px;background:#474747"></div>
<div class="mid" style="left:1456px;top:384.500px;width:266px;height:27px"></div>
<svg style="left:1462px;top:392px" width="17" height="13" viewBox="0 0 17 13"><path d="M.500 6.500 Q8.500 -3.500 16.500 6.500 Q8.500 16.500 .500 6.500Z" fill="#dcdcdc"/><circle cx="8.500" cy="6" r="3.600" fill="#333"/><circle cx="8.500" cy="6" r="1.700" fill="#dcdcdc"/></svg>
<svg style="left:1484.500px;top:385.800px" width="39" height="23.400" viewBox="0 0 39 23.400"><rect x="1" y="1" width="37" height="21.400" fill="#0a0a0a" stroke="#f4f4f4" stroke-width="2" stroke-dasharray="5.600 3.900" stroke-dashoffset="2.800"/></svg>
<svg style="left:1487.700px;top:388.400px" width="32.600" height="18" viewBox="0 0 1920 1080" preserveAspectRatio="none"><rect width="1920" height="1080" fill="url(#wpbg)"/><path d="M1437 143 L1808 543 L1590 955 L1111 492Z" fill="#9b8bfb"/><path d="M1111 492 L1339 713 L1700 1080 L780 1080Z" fill="#78a1fd"/><path d="M780 1080 Q900 700 1235 688 L1339 713 L1720 1080Z" fill="#3545a8"/><rect x="1548" y="626" width="360" height="394" fill="#eef1fa"/><rect y="1032" width="1920" height="48" fill="#e6ebf3"/></svg>
<span style="left:1531px;top:389.800px;font-size:14px;line-height:20px;color:#e6e6e6;letter-spacing:-.1px">Background</span>
<!-- layers bottom bar -->
<div style="left:1456px;top:981px;width:266px;height:33px;background:#474747;border-top:1.500px solid #2c2c2c"></div>
<div style="left:1456px;top:1008px;width:266px;height:1.500px;background:#2c2c2c"></div>
<svg style="left:1544px;top:988px" width="170" height="17" viewBox="0 0 170 17">
<g fill="none" stroke="#d0d0d0" stroke-width="1.800"><rect x="2.500" y="5.500" width="7" height="5.500" rx="2"/><rect x="10" y="5.500" width="7" height="5.500" rx="2"/></g><path d="M6.500 8.300 L13 8.300" stroke="#d0d0d0" stroke-width="1.600"/>
<text x="28" y="13" font-family="Liberation Sans, sans-serif" font-size="12.500" fill="#d0d0d0">eff</text>
<circle cx="59.500" cy="8.500" r="7" fill="none" stroke="#d0d0d0" stroke-width="1.400"/><path d="M59.500 1.500 A7 7 0 0 0 59.500 15.500Z" fill="#d0d0d0"/>
<rect x="77" y="3" width="15" height="11" fill="#d0d0d0"/><circle cx="84.500" cy="8.500" r="3.200" fill="#474747"/>
<path d="M102 3.500 Q102 2.500 103 2.500 L108 2.500 L109.500 4.500 L116 4.500 Q117 4.500 117 5.500 L117 14 L102 14Z" fill="#d0d0d0"/>
<path d="M127.500 2 L141.500 2 L141.500 15.500 L132.500 15.500 L127.500 10.500Z" fill="none" stroke="#d0d0d0" stroke-width="1.400"/><path d="M127.500 10.500 L132.500 10.500 L132.500 15.500Z" fill="#d0d0d0"/>
<path d="M152.500 4 L166.500 4 L164.500 15.500 L154.500 15.500Z" fill="#d0d0d0"/><ellipse cx="159.500" cy="3.500" rx="7.500" ry="2" fill="#474747" stroke="#d0d0d0" stroke-width="1.200"/>
</svg>
</div></div>
<div class="menu m1" style="left:454px;top:68px;width:190.500px"><div class="mi"><span>新建</span><i class="ar"></i></div><div class="mi"><span>复制图层</span><em>Ctrl + J</em></div><div class="mi"><span>复制到...</span></div><div class="mi"><span>删除</span></div><div class="sep"></div><div class="mi"><span>图层样式</span><i class="ar"></i></div><div class="sep"></div><div class="mi"><span>新建图层</span><i class="ar"></i></div><div class="mi hl"><span>新调整图层</span><i class="ar"></i></div><div class="sep"></div><div class="mi"><span>光栅遮罩</span><i class="ar"></i></div><div class="mi"><span>矢量蒙版</span><i class="ar"></i></div><div class="mi dis"><span>剪切蒙版</span><em>Alt+Ctrl + G</em></div><div class="sep"></div><div class="mi"><span class="lat">Smart Object</span><i class="ar"></i></div><div class="sep"></div><div class="mi dis"><span>栅格化</span></div><div class="mi dis"><span>栅格化图层样式</span></div><div class="sep"></div><div class="mi"><span>图层组</span><em>Ctrl + G</em></div><div class="sep"></div><div class="mi"><span>排列</span><i class="ar"></i></div><div class="sep"></div><div class="mi"><span class="lat">Animation</span><i class="ar"></i></div><div class="mi dis"><span>向下合并</span><em>Ctrl + E</em></div><div class="mi dis"><span>合并图层</span></div><div class="mi"><span>拼合图像</span></div></div><div class="menu m2" style="left:647px;top:263px;width:130px"><div class="mi"><span>亮度 / 对比度...</span></div><div class="mi"><span>色阶...</span></div><div class="mi"><span>曲线...</span></div><div class="mi"><span>曝光度...</span></div><div class="sep"></div><div class="mi"><span>自然饱和度...</span></div><div class="mi"><span>色调/饱和度...</span></div><div class="mi"><span>色彩平衡...</span></div><div class="mi"><span>黑白...</span></div><div class="mi"><span>图片滤镜...</span></div><div class="mi"><span>通道混合器...</span></div><div class="mi"><span>颜色查找...</span></div><div class="sep"></div><div class="mi"><span>反向</span></div><div class="mi"><span>色调分离...</span></div><div class="mi"><span>阈值...</span></div><div class="mi"><span>渐变映射...</span></div><div class="mi"><span>可选颜色...</span></div><div class="sep"></div><div class="mi"><span>微软雅黑...</span></div></div></body></html>
